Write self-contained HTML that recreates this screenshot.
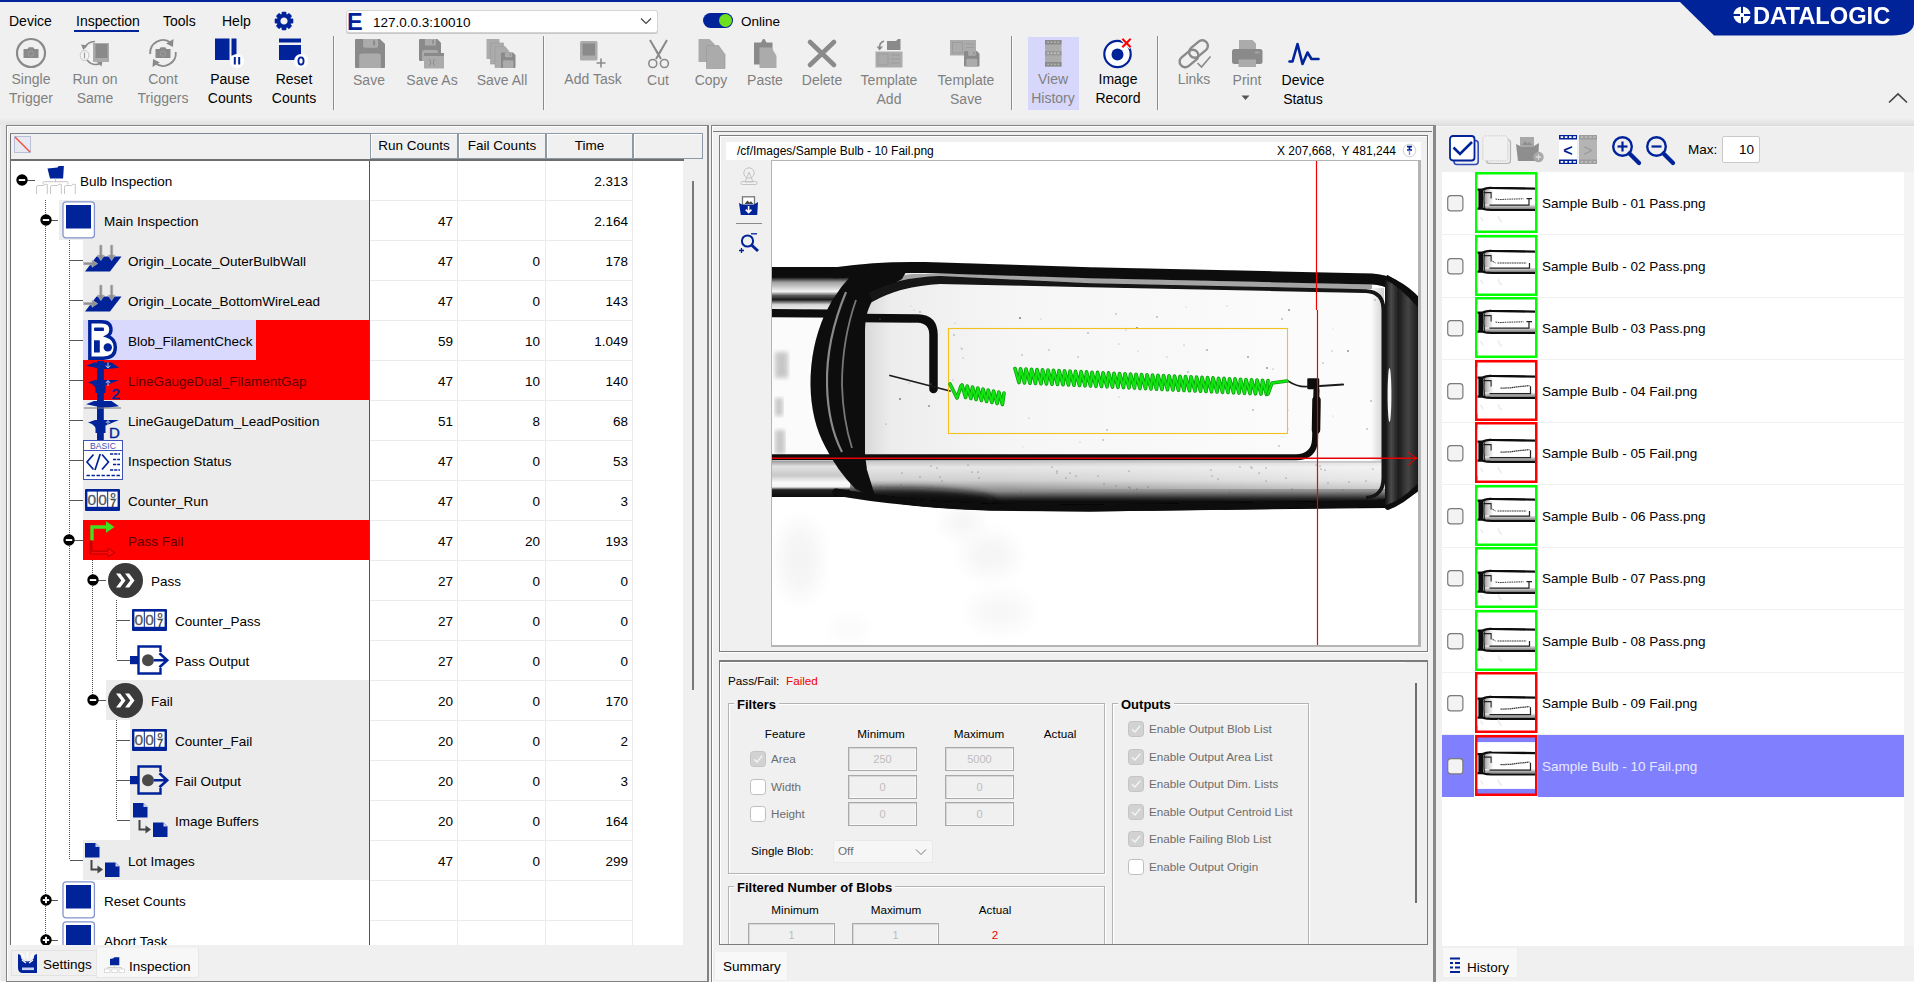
<!DOCTYPE html><html><head><meta charset="utf-8"><title>Inspection</title><style>
*{box-sizing:border-box}
html,body{margin:0;padding:0}
html{overflow:hidden;width:1914px;height:982px}
body{width:1914px;height:982px;overflow:hidden;background:#f0f0f0;font-family:"Liberation Sans",sans-serif;font-size:13px;color:#000;position:relative}
.abs{position:absolute}
.t{position:absolute;white-space:nowrap;line-height:1}
.c{text-align:center}
.r{text-align:right}
svg{position:absolute;overflow:visible}
</style></head><body>
<div class="abs" style="left:0;top:0;width:1914px;height:2px;background:#00239a"></div>
<div class="t" style="left:9px;top:13px;font-size:14px;color:#000;line-height:16px;">Device</div>
<div class="t" style="left:76px;top:13px;font-size:14px;color:#000;line-height:16px;">Inspection</div>
<div class="abs" style="left:74px;top:30px;width:65px;height:2px;background:#00239a"></div>
<div class="t" style="left:163px;top:13px;font-size:14px;color:#000;line-height:16px;">Tools</div>
<div class="t" style="left:222px;top:13px;font-size:14px;color:#000;line-height:16px;">Help</div>
<svg style="left:274px;top:11px" width="20" height="20" viewBox="0 0 20 20"><g transform="translate(10,10)"><rect x="-2.4" y="-9.3" width="4.8" height="5" rx="1" transform="rotate(0)" fill="#00239a"/><rect x="-2.4" y="-9.3" width="4.8" height="5" rx="1" transform="rotate(45)" fill="#00239a"/><rect x="-2.4" y="-9.3" width="4.8" height="5" rx="1" transform="rotate(90)" fill="#00239a"/><rect x="-2.4" y="-9.3" width="4.8" height="5" rx="1" transform="rotate(135)" fill="#00239a"/><rect x="-2.4" y="-9.3" width="4.8" height="5" rx="1" transform="rotate(180)" fill="#00239a"/><rect x="-2.4" y="-9.3" width="4.8" height="5" rx="1" transform="rotate(225)" fill="#00239a"/><rect x="-2.4" y="-9.3" width="4.8" height="5" rx="1" transform="rotate(270)" fill="#00239a"/><rect x="-2.4" y="-9.3" width="4.8" height="5" rx="1" transform="rotate(315)" fill="#00239a"/><circle r="5.4" fill="none" stroke="#00239a" stroke-width="3.6"/></g></svg>
<div class="abs" style="left:346px;top:9.5px;width:312px;height:23.5px;background:#fff;border:1px solid #d4d4d4;border-radius:3px;box-shadow:0 1px 0 #c8c8c8"></div>
<div class="t" style="left:347px;top:10px;font-size:23.5px;color:#00239a;line-height:25.5px;font-weight:bold;line-height:25px;">E</div>
<div class="t" style="left:373px;top:15px;font-size:13.5px;color:#000;line-height:15.5px;">127.0.0.3:10010</div>
<svg style="left:640px;top:17px" width="12" height="8" viewBox="0 0 12 8"><path d="M1,1.5 L6,6.5 L11,1.5" fill="none" stroke="#444" stroke-width="1.2"/></svg>
<div class="abs" style="left:703px;top:12.5px;width:30px;height:15px;border-radius:7.5px;background:#00239a"></div>
<div class="abs" style="left:718.5px;top:13.5px;width:13px;height:13px;border-radius:6.5px;background:#6ee01e"></div>
<div class="t" style="left:741px;top:13.5px;font-size:13.5px;color:#000;line-height:15.5px;">Online</div>
<div class="abs" style="left:333px;top:36px;width:1px;height:74px;background:#8c8c8c"></div>
<div class="abs" style="left:334px;top:36px;width:1px;height:74px;background:#fafafa"></div>
<div class="abs" style="left:543px;top:36px;width:1px;height:74px;background:#8c8c8c"></div>
<div class="abs" style="left:544px;top:36px;width:1px;height:74px;background:#fafafa"></div>
<div class="abs" style="left:1011px;top:36px;width:1px;height:74px;background:#8c8c8c"></div>
<div class="abs" style="left:1012px;top:36px;width:1px;height:74px;background:#fafafa"></div>
<div class="abs" style="left:1157px;top:36px;width:1px;height:74px;background:#8c8c8c"></div>
<div class="abs" style="left:1158px;top:36px;width:1px;height:74px;background:#fafafa"></div>
<svg style="left:15px;top:37px" width="32" height="32" viewBox="0 0 32 32"><circle cx="16" cy="16" r="14" fill="none" stroke="#8a8a8a" stroke-width="2.2"/><path d="M8.5,12.0 h4 l1.2,-1.8 h4.6 l1.2,1.8 h4 v9 h-15 z" fill="#8a8a8a"/><circle cx="16" cy="16.7" r="2.6" fill="none" stroke="#a0a0a0" stroke-width="0.9"/></svg>
<div class="t" style="left:-19px;top:71px;font-size:14px;color:#808080;line-height:16px;width:100px;text-align:center;">Single</div><div class="t" style="left:-19px;top:90px;font-size:14px;color:#808080;line-height:16px;width:100px;text-align:center;">Trigger</div>
<svg style="left:78px;top:38px" width="34" height="30" viewBox="0 0 34 30"><path d="M17,3.5 A11.5,11.5 0 0 0 6.5,10" fill="none" stroke="#8a8a8a" stroke-width="1.6"/><path d="M3,6.5 l6.5,1 l-4.2,4.6 z" fill="#8a8a8a"/><path d="M9,22 A11.5,11.5 0 0 0 21,26" fill="none" stroke="#8a8a8a" stroke-width="1.6"/><path d="M24.5,23 l-1,5.6 l-4.6,-4 z" fill="#8a8a8a"/><rect x="15" y="5" width="16" height="19" fill="#ababab"/><rect x="17.5" y="6" width="12" height="14" fill="#8a8a8a"/><ellipse cx="6.5" cy="17.5" rx="4.3" ry="5" fill="#f4f4f4" stroke="#c4c4c4" stroke-width="1"/><rect x="5.9" y="14.5" width="1.2" height="6" fill="#9a9a9a"/><rect x="12.5" y="8" width="2" height="14" fill="#f8f8f8"/></svg>
<div class="t" style="left:45px;top:71px;font-size:14px;color:#808080;line-height:16px;width:100px;text-align:center;">Run on</div><div class="t" style="left:45px;top:90px;font-size:14px;color:#808080;line-height:16px;width:100px;text-align:center;">Same</div>
<svg style="left:147px;top:37px" width="32" height="32" viewBox="0 0 32 32"><path d="M3.2,17 A12.8,12.8 0 0 1 24,6" fill="none" stroke="#8a8a8a" stroke-width="1.8"/><path d="M26.5,2 l-0.6,8 l-6.8,-3.6 z" fill="#8a8a8a"/><path d="M28.8,15 A12.8,12.8 0 0 1 8,26" fill="none" stroke="#8a8a8a" stroke-width="1.8"/><path d="M5.5,30 l0.6,-8 l6.8,3.6 z" fill="#8a8a8a"/><path d="M8.5,12.0 h4 l1.2,-1.8 h4.6 l1.2,1.8 h4 v9 h-15 z" fill="#8a8a8a"/><circle cx="16" cy="16.7" r="2.6" fill="none" stroke="#a0a0a0" stroke-width="0.9"/></svg>
<div class="t" style="left:113px;top:71px;font-size:14px;color:#808080;line-height:16px;width:100px;text-align:center;">Cont</div><div class="t" style="left:113px;top:90px;font-size:14px;color:#808080;line-height:16px;width:100px;text-align:center;">Triggers</div>
<svg style="left:215px;top:38px" width="32" height="32" viewBox="0 0 32 32"><rect x="0" y="0.5" width="14.5" height="21.5" fill="#00239a"/><rect x="16.5" y="0.5" width="5" height="17" fill="#00239a"/><circle cx="22" cy="23" r="7" fill="#fff"/><rect x="18.8" y="19" width="2" height="7.5" fill="#00239a"/><rect x="23.2" y="19" width="2" height="7.5" fill="#00239a"/></svg>
<div class="t" style="left:180px;top:71px;font-size:14px;color:#000;line-height:16px;width:100px;text-align:center;">Pause</div><div class="t" style="left:180px;top:90px;font-size:14px;color:#000;line-height:16px;width:100px;text-align:center;">Counts</div>
<svg style="left:279px;top:38px" width="32" height="32" viewBox="0 0 32 32"><rect x="0" y="0.5" width="22" height="4" fill="#00239a"/><rect x="0" y="7" width="22" height="15" fill="#00239a"/><circle cx="22" cy="23" r="7" fill="#fff"/><ellipse cx="22" cy="23" rx="2.6" ry="3.6" fill="none" stroke="#00239a" stroke-width="1.8"/></svg>
<div class="t" style="left:244px;top:71px;font-size:14px;color:#000;line-height:16px;width:100px;text-align:center;">Reset</div><div class="t" style="left:244px;top:90px;font-size:14px;color:#000;line-height:16px;width:100px;text-align:center;">Counts</div>
<svg style="left:355px;top:39px" width="30" height="29" viewBox="0 0 30 29"><path d="M1,0 H24.9 L30,5.1000000000000005 V28 Q30,29 29,29 H1 Q0,29 0,28 V1 Q0,0 1,0 Z" fill="#8a8a8a"/><path d="M8.100000000000001,0 H23.1 V6.96 Q23.1,8.7 21.299999999999997,8.7 H9.9 Q8.100000000000001,8.7 8.100000000000001,6.96 Z" fill="#ababab"/><rect x="18.0" y="1.4500000000000002" width="2.1" height="4.930000000000001" fill="#8a8a8a"/><path d="M4.2,29 V16.82 Q4.2,14.5 7.199999999999999,14.5 H22.8 Q25.8,14.5 25.8,16.82 V29 Z" fill="#ababab"/></svg>
<div class="t" style="left:319px;top:72px;font-size:14px;color:#808080;line-height:16px;width:100px;text-align:center;">Save</div>
<svg style="left:419px;top:39px" width="26" height="30" viewBox="0 0 26 30"><path d="M1,0 H18.259999999999998 L22,3.74 V21 Q22,22 21,22 H1 Q0,22 0,21 V1 Q0,0 1,0 Z" fill="#8a8a8a"/><path d="M5.94,0 H16.94 V5.279999999999999 Q16.94,6.6 15.62,6.6 H7.260000000000001 Q5.94,6.6 5.94,5.279999999999999 Z" fill="#ababab"/><rect x="13.2" y="1.1" width="1.54" height="3.74" fill="#8a8a8a"/><path d="M3.08,22 V12.76 Q3.08,11.0 5.279999999999999,11.0 H16.72 Q18.919999999999998,11.0 18.919999999999998,12.76 V22 Z" fill="#ababab"/><rect x="5" y="14" width="20" height="15.5" fill="#ababab"/><rect x="5" y="14" width="20" height="3" fill="#8a8a8a"/><path d="M10,20 q3.5,3.5 0,7 M16,20 q-3.5,3.5 0,7" stroke="#8a8a8a" stroke-width="1" fill="none"/></svg>
<div class="t" style="left:382px;top:72px;font-size:14px;color:#808080;line-height:16px;width:100px;text-align:center;">Save As</div>
<svg style="left:486px;top:39px" width="31" height="30" viewBox="0 0 31 30"><rect x="0.5" y="0" width="13" height="20" fill="#ababab"/><rect x="4.5" y="4" width="13" height="21" fill="#ababab" stroke="#9c9c9c" stroke-width="0.6"/><path d="M9,7.5 h10 l4,5 v16 h-14 z" fill="#ababab" stroke="#9c9c9c" stroke-width="0.6"/><path d="M16,13.5 H27.035 L29.5,15.965 V28.0 Q29.5,29.0 28.5,29.0 H16 Q15,29.0 15,28.0 V14.5 Q15,13.5 16,13.5 Z" fill="#8a8a8a"/><path d="M18.915,13.5 H26.165 V17.22 Q26.165,18.15 25.295,18.15 H19.785 Q18.915,18.15 18.915,17.22 Z" fill="#ababab"/><rect x="23.7" y="14.275" width="1.0150000000000001" height="2.6350000000000002" fill="#8a8a8a"/><path d="M17.03,29.0 V22.490000000000002 Q17.03,21.25 18.48,21.25 H26.02 Q27.47,21.25 27.47,22.490000000000002 V29.0 Z" fill="#ababab"/></svg>
<div class="t" style="left:452px;top:72px;font-size:14px;color:#808080;line-height:16px;width:100px;text-align:center;">Save All</div>
<svg style="left:580px;top:41px" width="28" height="28" viewBox="0 0 28 28"><rect x="0" y="0" width="17.5" height="19.5" rx="1.5" fill="#ababab"/><rect x="2.5" y="2.5" width="12.5" height="12" fill="#8a8a8a"/><path d="M16.5,22 h9 M21,17.5 v9" stroke="#8a8a8a" stroke-width="1.6"/></svg>
<div class="t" style="left:543px;top:71px;font-size:14px;color:#808080;line-height:16px;width:100px;text-align:center;">Add Task</div>
<svg style="left:647px;top:39px" width="24" height="30" viewBox="0 0 24 30"><path d="M3,1 L14,20 M20,1 L9,20" stroke="#8a8a8a" stroke-width="2" fill="none"/><path d="M3,1 L11.5,13.5 L10,15 Z M20,1 L11.5,13.5 L13,15 Z" fill="#8a8a8a"/><ellipse cx="5.8" cy="24.5" rx="4" ry="4" fill="none" stroke="#8a8a8a" stroke-width="1.6"/><ellipse cx="17.4" cy="24.5" rx="4" ry="4" fill="none" stroke="#8a8a8a" stroke-width="1.6"/></svg>
<div class="t" style="left:608px;top:72px;font-size:14px;color:#808080;line-height:16px;width:100px;text-align:center;">Cut</div>
<svg style="left:698px;top:39px" width="28" height="30" viewBox="0 0 28 30"><path d="M0.5,0 h11 l5,5 v18 h-16 z" fill="#ababab"/><path d="M8.5,6.5 h12 l6.5,9 v14 h-18.5 z" fill="#ababab" stroke="#9a9a9a" stroke-width="0.7"/></svg>
<div class="t" style="left:661px;top:72px;font-size:14px;color:#808080;line-height:16px;width:100px;text-align:center;">Copy</div>
<svg style="left:753px;top:38px" width="25" height="31" viewBox="0 0 25 31"><path d="M1,4.5 h7 l2,-3.5 h1.5 l2,3.5 h6 v22 h-18.5 z" fill="#8a8a8a"/><path d="M6.5,9.5 h12 l5,8.5 v12 h-17 z" fill="#ababab"/></svg>
<div class="t" style="left:715px;top:72px;font-size:14px;color:#808080;line-height:16px;width:100px;text-align:center;">Paste</div>
<svg style="left:808px;top:40px" width="28" height="28" viewBox="0 0 28 28"><path d="M2,2 L26,25 M26,2 L2,25" stroke="#8a8a8a" stroke-width="4.6" stroke-linecap="round"/></svg>
<div class="t" style="left:772px;top:72px;font-size:14px;color:#808080;line-height:16px;width:100px;text-align:center;">Delete</div>
<svg style="left:875px;top:38px" width="30" height="30" viewBox="0 0 30 30"><rect x="0.5" y="13.5" width="27" height="16" fill="#ababab"/><rect x="3" y="16" width="10" height="11" fill="none" stroke="#9a9a9a" stroke-width="0.8"/><path d="M16,17 h9 M16,21 h9 M16,25 h9" stroke="#9a9a9a" stroke-width="0.9"/><path d="M12,3 h9 l2,-2 h2.5 v11 h-13.5 z" fill="#8a8a8a"/><path d="M9,3 q-5,2 -4.5,7" fill="none" stroke="#8a8a8a" stroke-width="1.6"/><path d="M1.5,8.5 h6.5 l-3.4,4 z" fill="#8a8a8a"/></svg>
<div class="t" style="left:839px;top:72px;font-size:14px;color:#808080;line-height:16px;width:100px;text-align:center;">Template</div><div class="t" style="left:839px;top:91px;font-size:14px;color:#808080;line-height:16px;width:100px;text-align:center;">Add</div>
<svg style="left:950px;top:40px" width="32" height="28" viewBox="0 0 32 28"><rect x="0" y="0" width="26" height="15.5" fill="#ababab"/><rect x="2.5" y="2.5" width="10" height="10.5" fill="none" stroke="#9a9a9a" stroke-width="0.8"/><path d="M16,4 h8 M16,7.5 h8" stroke="#9a9a9a" stroke-width="0.9"/><path d="M15,11 H26.865 L29.5,13.635 V25.5 Q29.5,26.5 28.5,26.5 H15 Q14,26.5 14,25.5 V12 Q14,11 15,11 Z" fill="#8a8a8a"/><path d="M18.185000000000002,11 H25.935000000000002 V14.719999999999999 Q25.935000000000002,15.649999999999999 25.005,15.649999999999999 H19.115000000000002 Q18.185000000000002,15.649999999999999 18.185000000000002,14.719999999999999 Z" fill="#ababab"/><rect x="23.299999999999997" y="11.775" width="1.0850000000000002" height="2.6350000000000002" fill="#8a8a8a"/><path d="M16.17,26.5 V19.990000000000002 Q16.17,18.75 17.72,18.75 H25.78 Q27.33,18.75 27.33,19.990000000000002 V26.5 Z" fill="#ababab"/></svg>
<div class="t" style="left:916px;top:72px;font-size:14px;color:#808080;line-height:16px;width:100px;text-align:center;">Template</div><div class="t" style="left:916px;top:91px;font-size:14px;color:#808080;line-height:16px;width:100px;text-align:center;">Save</div>
<div class="abs" style="left:1028px;top:37px;width:51px;height:73px;background:#d7d7fb"></div>
<svg style="left:1045px;top:40px" width="17" height="27" viewBox="0 0 17 27"><rect x="0" y="0" width="16.5" height="26.5" fill="#ababab"/><rect x="0" y="0" width="16.5" height="4.5" fill="#8a8a8a"/><rect x="0" y="22" width="16.5" height="4.5" fill="#8a8a8a"/><rect x="0" y="11" width="16.5" height="4.5" fill="#999"/><rect x="2.2" y="1.4" width="1.8" height="1.6" fill="#b4b4b4"/><rect x="2.2" y="23.6" width="1.8" height="1.6" fill="#b4b4b4"/><rect x="5.6" y="1.4" width="1.8" height="1.6" fill="#b4b4b4"/><rect x="5.6" y="23.6" width="1.8" height="1.6" fill="#b4b4b4"/><rect x="9.0" y="1.4" width="1.8" height="1.6" fill="#b4b4b4"/><rect x="9.0" y="23.6" width="1.8" height="1.6" fill="#b4b4b4"/><rect x="12.399999999999999" y="1.4" width="1.8" height="1.6" fill="#b4b4b4"/><rect x="12.399999999999999" y="23.6" width="1.8" height="1.6" fill="#b4b4b4"/><rect x="2.2" y="12.4" width="1.8" height="1.6" fill="#c4c4c4"/><rect x="5.6" y="12.4" width="1.8" height="1.6" fill="#c4c4c4"/><rect x="9.0" y="12.4" width="1.8" height="1.6" fill="#c4c4c4"/><rect x="12.399999999999999" y="12.4" width="1.8" height="1.6" fill="#c4c4c4"/></svg>
<div class="t" style="left:1003px;top:71px;font-size:14px;color:#808080;line-height:16px;width:100px;text-align:center;">View</div><div class="t" style="left:1003px;top:90px;font-size:14px;color:#808080;line-height:16px;width:100px;text-align:center;">History</div>
<svg style="left:1102px;top:38px" width="34" height="34" viewBox="0 0 34 34"><circle cx="15.5" cy="16" r="13.2" fill="#fff" stroke="#00239a" stroke-width="2.2"/><circle cx="15.5" cy="16.5" r="6" fill="#00239a"/><path d="M20,0.5 L29,9.5 M29,0.5 L20,9.5" stroke="#fff" stroke-width="4.5"/><path d="M20.3,0.8 L28.7,9.2 M28.7,0.8 L20.3,9.2" stroke="#f00" stroke-width="2.2"/></svg>
<div class="t" style="left:1068px;top:71px;font-size:14px;color:#000;line-height:16px;width:100px;text-align:center;">Image</div><div class="t" style="left:1068px;top:90px;font-size:14px;color:#000;line-height:16px;width:100px;text-align:center;">Record</div>
<svg style="left:1177px;top:37px" width="36" height="34" viewBox="0 0 36 34"><rect x="-10.5" y="-5.6" width="21" height="11.2" rx="5.6" transform="translate(12,21.5) rotate(-40)" fill="none" stroke="#8a8a8a" stroke-width="2.4"/><rect x="-10.5" y="-5.6" width="21" height="11.2" rx="5.6" transform="translate(21.5,12) rotate(-40)" fill="none" stroke="#8a8a8a" stroke-width="2.4"/><path d="M20.5,26 l4,4 l9,-10.5" fill="none" stroke="#8a8a8a" stroke-width="1.6"/></svg>
<div class="t" style="left:1144px;top:71px;font-size:14px;color:#808080;line-height:16px;width:100px;text-align:center;">Links</div>
<svg style="left:1232px;top:40px" width="31" height="28" viewBox="0 0 31 28"><path d="M7,0 h13.5 l3.5,3.5 v6 h-17 z" fill="#ababab"/><rect x="0" y="9" width="30.5" height="15" rx="2.5" fill="#8a8a8a"/><rect x="6.5" y="19.5" width="17.5" height="7.5" fill="#ababab"/><rect x="23" y="11.5" width="4.5" height="2" fill="#a5a5a5"/></svg>
<div class="t" style="left:1197px;top:72px;font-size:14px;color:#808080;line-height:16px;width:100px;text-align:center;">Print</div>
<svg style="left:1241px;top:95px" width="10" height="6" viewBox="0 0 10 6"><path d="M0.5,0.5 h8 l-4,4.5 z" fill="#555"/></svg>
<svg style="left:1288px;top:41px" width="32" height="26" viewBox="0 0 32 26"><path d="M1.5,20.5 H4.5 L9.5,3 L14.5,23 L19.5,11.5 L23.5,18 H30.5" fill="none" stroke="#00239a" stroke-width="2.6" stroke-linejoin="round" stroke-linecap="round"/></svg>
<div class="t" style="left:1253px;top:72px;font-size:14px;color:#000;line-height:16px;width:100px;text-align:center;">Device</div><div class="t" style="left:1253px;top:91px;font-size:14px;color:#000;line-height:16px;width:100px;text-align:center;">Status</div>
<div class="abs" style="left:0;top:118px;width:1914px;height:7px;background:linear-gradient(rgba(0,0,0,0),rgba(0,0,0,0.07))"></div>
<svg style="left:1888px;top:92px" width="20" height="12" viewBox="0 0 20 12"><path d="M1,10.5 L10,2 L19,10.5" fill="none" stroke="#444" stroke-width="1.7"/></svg>
<svg style="left:1680px;top:2px" width="234" height="36" viewBox="0 0 234 36"><path d="M0,0 H234 V22 Q232,33.5 212,33.5 H34 Z" fill="#00239a"/></svg>
<svg style="left:1733px;top:6px" width="20" height="20" viewBox="0 0 20 20"><circle cx="9" cy="9" r="8.6" fill="#fff"/><rect x="8" y="0" width="2" height="7" fill="#00239a"/><rect x="8" y="11" width="2" height="7" fill="#00239a"/><rect x="0" y="8" width="7" height="2" fill="#00239a"/><rect x="11" y="8" width="7" height="2" fill="#00239a"/></svg>
<div class="t" style="left:1753px;top:4px;font-size:23px;line-height:24px;font-weight:bold;color:#fff;letter-spacing:0;transform-origin:0 0;transform:scaleX(1.03)">DATALOGIC</div>
<div class="abs" style="left:1px;top:123px;width:5px;height:859px;background:#e8e8e8;"></div>
<div class="abs" style="left:0px;top:980.5px;width:1914px;height:1.5px;background:#f8f8f8;"></div>
<div class="abs" style="left:6px;top:125px;width:703px;height:857px;background:transparent;border:1px solid #828282;border-right:2px solid #828282;box-shadow:inset 1px 1px 0 #fff"></div>
<div class="abs" style="left:11px;top:160px;width:672px;height:785px;background:#fff;"></div>
<div class="abs" style="left:0;top:0;width:1914px;height:945px;overflow:hidden;pointer-events:none">
<div class="abs" style="left:59px;top:200px;width:310px;height:40px;background:#ececec;"></div>
<div class="abs" style="left:83px;top:240px;width:286px;height:40px;background:#ececec;"></div>
<div class="abs" style="left:83px;top:280px;width:286px;height:40px;background:#ececec;"></div>
<div class="abs" style="left:83px;top:320px;width:286px;height:40px;background:#ff0000;"></div>
<div class="abs" style="left:83px;top:320px;width:173px;height:40px;background:#d9d9fd;"></div>
<div class="abs" style="left:83px;top:360px;width:286px;height:40px;background:#ff0000;"></div>
<div class="abs" style="left:83px;top:400px;width:286px;height:40px;background:#ececec;"></div>
<div class="abs" style="left:83px;top:440px;width:286px;height:40px;background:#ececec;"></div>
<div class="abs" style="left:83px;top:480px;width:286px;height:40px;background:#ececec;"></div>
<div class="abs" style="left:83px;top:520px;width:286px;height:40px;background:#ff0000;"></div>
<div class="abs" style="left:106px;top:680px;width:263px;height:40px;background:#ececec;"></div>
<div class="abs" style="left:130px;top:720px;width:239px;height:40px;background:#ececec;"></div>
<div class="abs" style="left:130px;top:760px;width:239px;height:40px;background:#ececec;"></div>
<div class="abs" style="left:130px;top:800px;width:239px;height:40px;background:#ececec;"></div>
<div class="abs" style="left:83px;top:840px;width:286px;height:40px;background:#ececec;"></div>
<div class="abs" style="left:370px;top:200px;width:262px;height:1px;background:#ebebeb;"></div>
<div class="abs" style="left:370px;top:240px;width:262px;height:1px;background:#ebebeb;"></div>
<div class="abs" style="left:370px;top:280px;width:262px;height:1px;background:#ebebeb;"></div>
<div class="abs" style="left:370px;top:320px;width:262px;height:1px;background:#ebebeb;"></div>
<div class="abs" style="left:370px;top:360px;width:262px;height:1px;background:#ebebeb;"></div>
<div class="abs" style="left:370px;top:400px;width:262px;height:1px;background:#ebebeb;"></div>
<div class="abs" style="left:370px;top:440px;width:262px;height:1px;background:#ebebeb;"></div>
<div class="abs" style="left:370px;top:480px;width:262px;height:1px;background:#ebebeb;"></div>
<div class="abs" style="left:370px;top:520px;width:262px;height:1px;background:#ebebeb;"></div>
<div class="abs" style="left:370px;top:560px;width:262px;height:1px;background:#ebebeb;"></div>
<div class="abs" style="left:370px;top:600px;width:262px;height:1px;background:#ebebeb;"></div>
<div class="abs" style="left:370px;top:640px;width:262px;height:1px;background:#ebebeb;"></div>
<div class="abs" style="left:370px;top:680px;width:262px;height:1px;background:#ebebeb;"></div>
<div class="abs" style="left:370px;top:720px;width:262px;height:1px;background:#ebebeb;"></div>
<div class="abs" style="left:370px;top:760px;width:262px;height:1px;background:#ebebeb;"></div>
<div class="abs" style="left:370px;top:800px;width:262px;height:1px;background:#ebebeb;"></div>
<div class="abs" style="left:370px;top:840px;width:262px;height:1px;background:#ebebeb;"></div>
<div class="abs" style="left:370px;top:880px;width:262px;height:1px;background:#ebebeb;"></div>
<div class="abs" style="left:370px;top:920px;width:262px;height:1px;background:#ebebeb;"></div>
<div class="abs" style="left:370px;top:960px;width:262px;height:1px;background:#ebebeb;"></div>
<div class="abs" style="left:457px;top:160px;width:1px;height:785px;background:#ebebeb;"></div>
<div class="abs" style="left:545px;top:160px;width:1px;height:785px;background:#ebebeb;"></div>
<div class="abs" style="left:632px;top:160px;width:1px;height:785px;background:#ebebeb;"></div>
<div class="abs" style="left:45px;top:200px;width:1px;height:745px;background:repeating-linear-gradient(#555 0 1px,transparent 1px 2px)"></div>
<div class="abs" style="left:69px;top:240px;width:1px;height:620px;background:repeating-linear-gradient(#555 0 1px,transparent 1px 2px)"></div>
<div class="abs" style="left:92px;top:560px;width:1px;height:140px;background:repeating-linear-gradient(#555 0 1px,transparent 1px 2px)"></div>
<div class="abs" style="left:116px;top:600px;width:1px;height:60px;background:repeating-linear-gradient(#555 0 1px,transparent 1px 2px)"></div>
<div class="abs" style="left:116px;top:720px;width:1px;height:100px;background:repeating-linear-gradient(#555 0 1px,transparent 1px 2px)"></div>
<div class="abs" style="left:26px;top:180px;width:9px;height:1px;background:#555;"></div>
<svg style="left:38px;top:166.0px" width="38" height="30" viewBox="0 0 38 30"><path d="M9.5,2.6 L19.5,1.4 L20.6,0 H25.9 L25.1,12.5 H12 Z" fill="#00239a"/><path d="M9.5,2.6 L19.5,1.4 L21.5,3 L12,4.2 Z" fill="#3350c8" opacity="0.0"/><path d="M17.5,12.5 v3.5 M5,18.5 v-2 q0,-0.8 0.8,-0.8 h23.4 q0.8,0 0.8,0.8 v2" fill="none" stroke="#c6c6c6" stroke-width="1"/><path d="M-1.5,28 v-6.8 q0,-1.7 1.7,-1.7 h5.3 l1.6,-1.2 h2.2 v9.7" fill="#fff" stroke="#c6c6c6" stroke-width="1"/><path d="M12.5,28 v-6.8 q0,-1.7 1.7,-1.7 h5.3 l1.6,-1.2 h2.2 v9.7" fill="#fff" stroke="#c6c6c6" stroke-width="1"/><path d="M26.5,28 v-6.8 q0,-1.7 1.7,-1.7 h5.3 l1.6,-1.2 h2.2 v9.7" fill="#fff" stroke="#c6c6c6" stroke-width="1"/></svg>
<svg style="left:15.5px;top:174.2px" width="12" height="12" viewBox="0 0 12 12"><circle cx="6" cy="6" r="5.7" fill="#000"/><rect x="2.8" y="5.1" width="6.4" height="1.9" fill="#fff"/></svg>
<div class="t" style="left:80px;top:174px;font-size:13.5px;color:#000;line-height:16px;">Bulb Inspection</div>
<div class="t" style="left:546px;top:174px;font-size:13.5px;color:#000;line-height:16px;width:82px;text-align:right;">2.313</div>
<div class="abs" style="left:50px;top:220px;width:8px;height:1px;background:#555;"></div>
<svg style="left:62px;top:200.7px" width="34" height="38" viewBox="0 0 34 38"><rect x="1" y="0.8" width="31.4" height="36" rx="3" fill="#fff" stroke="#8493cf" stroke-width="1.3"/><rect x="4" y="4" width="25" height="23.5" fill="#00239a"/></svg>
<svg style="left:39.5px;top:214.2px" width="12" height="12" viewBox="0 0 12 12"><circle cx="6" cy="6" r="5.7" fill="#000"/><rect x="2.8" y="5.1" width="6.4" height="1.9" fill="#fff"/></svg>
<div class="t" style="left:104px;top:214px;font-size:13.5px;color:#000;line-height:16px;">Main Inspection</div>
<div class="t" style="left:370px;top:214px;font-size:13.5px;color:#000;line-height:16px;width:83px;text-align:right;">47</div>
<div class="t" style="left:546px;top:214px;font-size:13.5px;color:#000;line-height:16px;width:82px;text-align:right;">2.164</div>
<div class="abs" style="left:70px;top:260px;width:13px;height:1px;background:#555;"></div>
<svg style="left:83px;top:241.0px" width="40" height="32" viewBox="0 0 40 32"><path d="M2,30.5 L13.5,15.5 H38.5 L27,30.5 Z" fill="#00239a"/><path d="M16.5,4 h2.6 v10 h2.4 l-3.7,5.5 l-3.7,-5.5 h2.4 z" fill="#8f8f8f" stroke="#c8c8c8" stroke-width="0.6"/><path d="M27.3,4 h2.6 v10 h2.4 l-3.7,5.5 l-3.7,-5.5 h2.4 z" fill="#8f8f8f" stroke="#c8c8c8" stroke-width="0.6"/><path d="M0.5,21.3 h8.5 v-2.3 l5.5,3.6 l-5.5,3.6 v-2.3 h-8.5 z" fill="#8f8f8f" stroke="#c8c8c8" stroke-width="0.6"/></svg>
<div class="t" style="left:128px;top:254px;font-size:13.5px;color:#000;line-height:16px;">Origin_Locate_OuterBulbWall</div>
<div class="t" style="left:370px;top:254px;font-size:13.5px;color:#000;line-height:16px;width:83px;text-align:right;">47</div>
<div class="t" style="left:458px;top:254px;font-size:13.5px;color:#000;line-height:16px;width:82px;text-align:right;">0</div>
<div class="t" style="left:546px;top:254px;font-size:13.5px;color:#000;line-height:16px;width:82px;text-align:right;">178</div>
<div class="abs" style="left:70px;top:300px;width:13px;height:1px;background:#555;"></div>
<svg style="left:83px;top:281.0px" width="40" height="32" viewBox="0 0 40 32"><path d="M2,30.5 L13.5,15.5 H38.5 L27,30.5 Z" fill="#00239a"/><path d="M16.5,4 h2.6 v10 h2.4 l-3.7,5.5 l-3.7,-5.5 h2.4 z" fill="#8f8f8f" stroke="#c8c8c8" stroke-width="0.6"/><path d="M27.3,4 h2.6 v10 h2.4 l-3.7,5.5 l-3.7,-5.5 h2.4 z" fill="#8f8f8f" stroke="#c8c8c8" stroke-width="0.6"/><path d="M0.5,21.3 h8.5 v-2.3 l5.5,3.6 l-5.5,3.6 v-2.3 h-8.5 z" fill="#8f8f8f" stroke="#c8c8c8" stroke-width="0.6"/></svg>
<div class="t" style="left:128px;top:294px;font-size:13.5px;color:#000;line-height:16px;">Origin_Locate_BottomWireLead</div>
<div class="t" style="left:370px;top:294px;font-size:13.5px;color:#000;line-height:16px;width:83px;text-align:right;">47</div>
<div class="t" style="left:458px;top:294px;font-size:13.5px;color:#000;line-height:16px;width:82px;text-align:right;">0</div>
<div class="t" style="left:546px;top:294px;font-size:13.5px;color:#000;line-height:16px;width:82px;text-align:right;">143</div>
<div class="abs" style="left:70px;top:340px;width:13px;height:1px;background:#555;"></div>
<svg style="left:86px;top:319.5px" width="32" height="42" viewBox="0 0 32 42"><path d="M3.8,1.8 H15.5 Q25,1.8 25,9.8 Q25,14.2 21.3,16.2 Q29.3,18.8 29.3,27.6 Q29.3,38.2 17.5,38.2 H3.8 Z" fill="#fff" stroke="#00239a" stroke-width="3.4"/><rect x="8" y="7.6" width="10" height="3.4" rx="1" fill="#00239a"/><rect x="8" y="20.3" width="5.8" height="12.2" fill="#00239a"/><circle cx="21.8" cy="27.4" r="4.2" fill="#00239a"/></svg>
<div class="t" style="left:128px;top:334px;font-size:13.5px;color:#000;line-height:16px;">Blob_FilamentCheck</div>
<div class="t" style="left:370px;top:334px;font-size:13.5px;color:#000;line-height:16px;width:83px;text-align:right;">59</div>
<div class="t" style="left:458px;top:334px;font-size:13.5px;color:#000;line-height:16px;width:82px;text-align:right;">10</div>
<div class="t" style="left:546px;top:334px;font-size:13.5px;color:#000;line-height:16px;width:82px;text-align:right;">1.049</div>
<div class="abs" style="left:70px;top:380px;width:13px;height:1px;background:#555;"></div>
<svg style="left:83px;top:360.5px" width="40" height="40" viewBox="0 0 40 40"><rect x="14" y="0" width="6.8" height="40" fill="#00239a"/><path d="M3,4.7 L11,1.5 H28.5 L36,6.7 Q26,8.0 19.5,8.0 Q12,6.5 3,4.7 Z" fill="#00239a"/><path d="M5,21.5 L12,19 H36 L31,21 Q26,23.5 22.5,24.5 V32 H12.5 V27 Q11,23 5,21.5 Z" fill="#00239a"/><path d="M25,1.5 v5 M22.8,4.5 l2.2,2.5 l2.2,-2.5" fill="none" stroke="#d8d8e8" stroke-width="0.9"/><path d="M25,25 v-5 M22.8,22 l2.2,-2.5 l2.2,2.5" fill="none" stroke="#d8d8e8" stroke-width="0.9"/><text x="28.5" y="37.5" font-size="15" fill="#00239a" stroke="#00239a" stroke-width="0.5" font-family="Liberation Sans,sans-serif">2</text></svg>
<div class="t" style="left:128px;top:374px;font-size:13.5px;color:#5c0000;line-height:16px;">LineGaugeDual_FilamentGap</div>
<div class="t" style="left:370px;top:374px;font-size:13.5px;color:#000;line-height:16px;width:83px;text-align:right;">47</div>
<div class="t" style="left:458px;top:374px;font-size:13.5px;color:#000;line-height:16px;width:82px;text-align:right;">10</div>
<div class="t" style="left:546px;top:374px;font-size:13.5px;color:#000;line-height:16px;width:82px;text-align:right;">140</div>
<div class="abs" style="left:70px;top:420px;width:13px;height:1px;background:#555;"></div>
<svg style="left:83px;top:400.5px" width="40" height="40" viewBox="0 0 40 40"><rect x="14" y="0" width="6.8" height="40" fill="#00239a"/><path d="M3,3.2 L11,0 H28.5 L36,5.2 Q26,6.5 19.5,6.5 Q12,5 3,3.2 Z" fill="#00239a"/><path d="M1,7 H38" stroke="#777" stroke-width="1"/><path d="M5,21.5 L12,19 H36 L31,21 Q26,23.5 22.5,24.5 V32 H12.5 V27 Q11,23 5,21.5 Z" fill="#00239a"/><path d="M25,25 v-5 M22.8,22 l2.2,-2.5 l2.2,2.5" fill="none" stroke="#d8d8e8" stroke-width="0.9"/><text x="26" y="37" font-size="15" fill="#00239a" stroke="#00239a" stroke-width="0.4" font-family="Liberation Sans,sans-serif">D</text></svg>
<div class="t" style="left:128px;top:414px;font-size:13.5px;color:#000;line-height:16px;">LineGaugeDatum_LeadPosition</div>
<div class="t" style="left:370px;top:414px;font-size:13.5px;color:#000;line-height:16px;width:83px;text-align:right;">51</div>
<div class="t" style="left:458px;top:414px;font-size:13.5px;color:#000;line-height:16px;width:82px;text-align:right;">8</div>
<div class="t" style="left:546px;top:414px;font-size:13.5px;color:#000;line-height:16px;width:82px;text-align:right;">68</div>
<div class="abs" style="left:70px;top:460px;width:13px;height:1px;background:#555;"></div>
<svg style="left:83px;top:439.5px" width="40" height="40" viewBox="0 0 40 40"><rect x="0.5" y="0.5" width="39" height="39" fill="#fff" stroke="#3d52b5" stroke-width="1"/><path d="M0.5,10.5 H39.5" stroke="#3d52b5" stroke-width="1"/><text x="20" y="8.8" font-size="8.6" text-anchor="middle" fill="#3d52b5" font-family="Liberation Sans,sans-serif">BASIC</text><path d="M10.5,14.5 L4,22 L10.5,29.5 M19,14.5 L25.5,22 L19,29.5 M17.2,14 L12,30" fill="none" stroke="#00239a" stroke-width="1.7"/><path d="M27,14 H37" stroke="#00239a" stroke-width="1.3" stroke-dasharray="3.2 1"/><path d="M30,19.5 H37" stroke="#00239a" stroke-width="1.3" stroke-dasharray="3.2 1"/><path d="M30,24.5 H37" stroke="#00239a" stroke-width="1.3" stroke-dasharray="3.2 1"/><path d="M27,30 H37" stroke="#00239a" stroke-width="1.3" stroke-dasharray="3.2 1"/><path d="M3.5,35.5 H37" stroke="#00239a" stroke-width="1.3" stroke-dasharray="3.4 1.6"/></svg>
<div class="t" style="left:128px;top:454px;font-size:13.5px;color:#000;line-height:16px;">Inspection Status</div>
<div class="t" style="left:370px;top:454px;font-size:13.5px;color:#000;line-height:16px;width:83px;text-align:right;">47</div>
<div class="t" style="left:458px;top:454px;font-size:13.5px;color:#000;line-height:16px;width:82px;text-align:right;">0</div>
<div class="t" style="left:546px;top:454px;font-size:13.5px;color:#000;line-height:16px;width:82px;text-align:right;">53</div>
<div class="abs" style="left:70px;top:500px;width:13px;height:1px;background:#555;"></div>
<svg style="left:85px;top:489.2px" width="35" height="22" viewBox="0 0 35 22"><rect x="0" y="0" width="35" height="22" rx="1" fill="#00239a"/><rect x="2.4" y="2.6" width="9.4" height="15.2" fill="#fff"/><rect x="12.8" y="2.6" width="9.4" height="15.2" fill="#fff"/><rect x="23.2" y="2.6" width="9.4" height="15.2" fill="#fff"/><text x="6.9" y="15.8" font-size="15.5" text-anchor="middle" fill="#5a5a5a" stroke="#5a5a5a" stroke-width="0.35" font-family="Liberation Sans,sans-serif">0</text><text x="17.5" y="15.8" font-size="15.5" text-anchor="middle" fill="#5a5a5a" stroke="#5a5a5a" stroke-width="0.35" font-family="Liberation Sans,sans-serif">0</text><path d="M24,9.7 H32.5" stroke="#9aa" stroke-width="0.7"/><text x="28.1" y="8.6" font-size="9" font-weight="bold" text-anchor="middle" fill="#555" font-family="Liberation Sans,sans-serif">o</text><text x="28.1" y="18.2" font-size="10.5" font-weight="bold" text-anchor="middle" fill="#444" font-family="Liberation Sans,sans-serif">7</text></svg>
<div class="t" style="left:128px;top:494px;font-size:13.5px;color:#000;line-height:16px;">Counter_Run</div>
<div class="t" style="left:370px;top:494px;font-size:13.5px;color:#000;line-height:16px;width:83px;text-align:right;">47</div>
<div class="t" style="left:458px;top:494px;font-size:13.5px;color:#000;line-height:16px;width:82px;text-align:right;">0</div>
<div class="t" style="left:546px;top:494px;font-size:13.5px;color:#000;line-height:16px;width:82px;text-align:right;">3</div>
<div class="abs" style="left:74px;top:540px;width:9px;height:1px;background:#555;"></div>
<svg style="left:90px;top:523.0px" width="27" height="36" viewBox="0 0 27 36"><path d="M2,17.5 V4 H17" fill="none" stroke="#3fe21d" stroke-width="3.4"/><path d="M16,-1.8 L24.5,4 L16,9.8 Z" fill="#3fe21d"/><path d="M1.8,18 V28.2 H18 V25 L24.5,29.6 L18,34 V31 H0.3 V18 Z" fill="#ff0a0a" stroke="#a80000" stroke-width="0.9"/></svg>
<svg style="left:63px;top:534.2px" width="12" height="12" viewBox="0 0 12 12"><circle cx="6" cy="6" r="5.7" fill="#000"/><rect x="2.8" y="5.1" width="6.4" height="1.9" fill="#fff"/></svg>
<div class="t" style="left:128px;top:534px;font-size:13.5px;color:#5c0000;line-height:16px;">Pass Fail</div>
<div class="t" style="left:370px;top:534px;font-size:13.5px;color:#000;line-height:16px;width:83px;text-align:right;">47</div>
<div class="t" style="left:458px;top:534px;font-size:13.5px;color:#000;line-height:16px;width:82px;text-align:right;">20</div>
<div class="t" style="left:546px;top:534px;font-size:13.5px;color:#000;line-height:16px;width:82px;text-align:right;">193</div>
<div class="abs" style="left:98px;top:580px;width:8px;height:1px;background:#555;"></div>
<svg style="left:108px;top:562.5px" width="35" height="35" viewBox="0 0 35 35"><circle cx="17.5" cy="17.5" r="17.5" fill="#3a3a3a"/><path d="M8,10.5 h4.2 l5.3,7 l-5.3,7 h-4.2 l5.3,-7 z M17,10.5 h4.2 l5.3,7 l-5.3,7 h-4.2 l5.3,-7 z" fill="#fff"/></svg>
<svg style="left:86.7px;top:574.2px" width="12" height="12" viewBox="0 0 12 12"><circle cx="6" cy="6" r="5.7" fill="#000"/><rect x="2.8" y="5.1" width="6.4" height="1.9" fill="#fff"/></svg>
<div class="t" style="left:151px;top:574px;font-size:13.5px;color:#000;line-height:16px;">Pass</div>
<div class="t" style="left:370px;top:574px;font-size:13.5px;color:#000;line-height:16px;width:83px;text-align:right;">27</div>
<div class="t" style="left:458px;top:574px;font-size:13.5px;color:#000;line-height:16px;width:82px;text-align:right;">0</div>
<div class="t" style="left:546px;top:574px;font-size:13.5px;color:#000;line-height:16px;width:82px;text-align:right;">0</div>
<div class="abs" style="left:117px;top:620px;width:13px;height:1px;background:#555;"></div>
<svg style="left:132px;top:609.2px" width="35" height="22" viewBox="0 0 35 22"><rect x="0" y="0" width="35" height="22" rx="1" fill="#00239a"/><rect x="2.4" y="2.6" width="9.4" height="15.2" fill="#fff"/><rect x="12.8" y="2.6" width="9.4" height="15.2" fill="#fff"/><rect x="23.2" y="2.6" width="9.4" height="15.2" fill="#fff"/><text x="6.9" y="15.8" font-size="15.5" text-anchor="middle" fill="#5a5a5a" stroke="#5a5a5a" stroke-width="0.35" font-family="Liberation Sans,sans-serif">0</text><text x="17.5" y="15.8" font-size="15.5" text-anchor="middle" fill="#5a5a5a" stroke="#5a5a5a" stroke-width="0.35" font-family="Liberation Sans,sans-serif">0</text><path d="M24,9.7 H32.5" stroke="#9aa" stroke-width="0.7"/><text x="28.1" y="8.6" font-size="9" font-weight="bold" text-anchor="middle" fill="#555" font-family="Liberation Sans,sans-serif">o</text><text x="28.1" y="18.2" font-size="10.5" font-weight="bold" text-anchor="middle" fill="#444" font-family="Liberation Sans,sans-serif">7</text></svg>
<div class="t" style="left:175px;top:614px;font-size:13.5px;color:#000;line-height:16px;">Counter_Pass</div>
<div class="t" style="left:370px;top:614px;font-size:13.5px;color:#000;line-height:16px;width:83px;text-align:right;">27</div>
<div class="t" style="left:458px;top:614px;font-size:13.5px;color:#000;line-height:16px;width:82px;text-align:right;">0</div>
<div class="t" style="left:546px;top:614px;font-size:13.5px;color:#000;line-height:16px;width:82px;text-align:right;">0</div>
<div class="abs" style="left:117px;top:660px;width:13px;height:1px;background:#555;"></div>
<svg style="left:130px;top:645.0px" width="40" height="30" viewBox="0 0 40 30"><path d="M30.5,-8 V-13.5 H8.5 V13.5 H30.5 V8" fill="none" stroke="#00239a" stroke-width="2.4" transform="translate(0,15)"/><rect x="0" y="11" width="9" height="8.2" fill="#00239a"/><path d="M24,15.2 H36 M29.5,8.2 L37.2,15.2 L29.5,22.2" fill="none" stroke="#00239a" stroke-width="2.6"/><circle cx="18" cy="15.2" r="6" fill="#4a4a4a"/></svg>
<div class="t" style="left:175px;top:654px;font-size:13.5px;color:#000;line-height:16px;">Pass Output</div>
<div class="t" style="left:370px;top:654px;font-size:13.5px;color:#000;line-height:16px;width:83px;text-align:right;">27</div>
<div class="t" style="left:458px;top:654px;font-size:13.5px;color:#000;line-height:16px;width:82px;text-align:right;">0</div>
<div class="t" style="left:546px;top:654px;font-size:13.5px;color:#000;line-height:16px;width:82px;text-align:right;">0</div>
<div class="abs" style="left:98px;top:700px;width:8px;height:1px;background:#555;"></div>
<svg style="left:108px;top:682.5px" width="35" height="35" viewBox="0 0 35 35"><circle cx="17.5" cy="17.5" r="17.5" fill="#3a3a3a"/><path d="M8,10.5 h4.2 l5.3,7 l-5.3,7 h-4.2 l5.3,-7 z M17,10.5 h4.2 l5.3,7 l-5.3,7 h-4.2 l5.3,-7 z" fill="#fff"/></svg>
<svg style="left:86.7px;top:694.2px" width="12" height="12" viewBox="0 0 12 12"><circle cx="6" cy="6" r="5.7" fill="#000"/><rect x="2.8" y="5.1" width="6.4" height="1.9" fill="#fff"/></svg>
<div class="t" style="left:151px;top:694px;font-size:13.5px;color:#000;line-height:16px;">Fail</div>
<div class="t" style="left:370px;top:694px;font-size:13.5px;color:#000;line-height:16px;width:83px;text-align:right;">20</div>
<div class="t" style="left:458px;top:694px;font-size:13.5px;color:#000;line-height:16px;width:82px;text-align:right;">0</div>
<div class="t" style="left:546px;top:694px;font-size:13.5px;color:#000;line-height:16px;width:82px;text-align:right;">170</div>
<div class="abs" style="left:117px;top:740px;width:13px;height:1px;background:#555;"></div>
<svg style="left:132px;top:729.2px" width="35" height="22" viewBox="0 0 35 22"><rect x="0" y="0" width="35" height="22" rx="1" fill="#00239a"/><rect x="2.4" y="2.6" width="9.4" height="15.2" fill="#fff"/><rect x="12.8" y="2.6" width="9.4" height="15.2" fill="#fff"/><rect x="23.2" y="2.6" width="9.4" height="15.2" fill="#fff"/><text x="6.9" y="15.8" font-size="15.5" text-anchor="middle" fill="#5a5a5a" stroke="#5a5a5a" stroke-width="0.35" font-family="Liberation Sans,sans-serif">0</text><text x="17.5" y="15.8" font-size="15.5" text-anchor="middle" fill="#5a5a5a" stroke="#5a5a5a" stroke-width="0.35" font-family="Liberation Sans,sans-serif">0</text><path d="M24,9.7 H32.5" stroke="#9aa" stroke-width="0.7"/><text x="28.1" y="8.6" font-size="9" font-weight="bold" text-anchor="middle" fill="#555" font-family="Liberation Sans,sans-serif">o</text><text x="28.1" y="18.2" font-size="10.5" font-weight="bold" text-anchor="middle" fill="#444" font-family="Liberation Sans,sans-serif">7</text></svg>
<div class="t" style="left:175px;top:734px;font-size:13.5px;color:#000;line-height:16px;">Counter_Fail</div>
<div class="t" style="left:370px;top:734px;font-size:13.5px;color:#000;line-height:16px;width:83px;text-align:right;">20</div>
<div class="t" style="left:458px;top:734px;font-size:13.5px;color:#000;line-height:16px;width:82px;text-align:right;">0</div>
<div class="t" style="left:546px;top:734px;font-size:13.5px;color:#000;line-height:16px;width:82px;text-align:right;">2</div>
<div class="abs" style="left:117px;top:780px;width:13px;height:1px;background:#555;"></div>
<svg style="left:130px;top:765.0px" width="40" height="30" viewBox="0 0 40 30"><path d="M30.5,-8 V-13.5 H8.5 V13.5 H30.5 V8" fill="none" stroke="#00239a" stroke-width="2.4" transform="translate(0,15)"/><rect x="0" y="11" width="9" height="8.2" fill="#00239a"/><path d="M24,15.2 H36 M29.5,8.2 L37.2,15.2 L29.5,22.2" fill="none" stroke="#00239a" stroke-width="2.6"/><circle cx="18" cy="15.2" r="6" fill="#4a4a4a"/></svg>
<div class="t" style="left:175px;top:774px;font-size:13.5px;color:#000;line-height:16px;">Fail Output</div>
<div class="t" style="left:370px;top:774px;font-size:13.5px;color:#000;line-height:16px;width:83px;text-align:right;">20</div>
<div class="t" style="left:458px;top:774px;font-size:13.5px;color:#000;line-height:16px;width:82px;text-align:right;">0</div>
<div class="t" style="left:546px;top:774px;font-size:13.5px;color:#000;line-height:16px;width:82px;text-align:right;">3</div>
<div class="abs" style="left:117px;top:820px;width:13px;height:1px;background:#555;"></div>
<svg style="left:133px;top:802.5px" width="36" height="36" viewBox="0 0 36 36"><path d="M0,0 h10.5 l4,4 v10.5 h-14.5 z" fill="#00239a"/><path d="M10.5,0 v4 h4" fill="#c9d0f0"/><path d="M20,19.5 h10.5 l4,4 v10.5 h-14.5 z" fill="#00239a"/><path d="M30.5,19.5 v4 h4" fill="#c9d0f0"/><path d="M6.5,17 v9.5 h7" fill="none" stroke="#444" stroke-width="2"/><path d="M12.5,22.5 l5.5,4 l-5.5,4 z" fill="#444"/></svg>
<div class="t" style="left:175px;top:814px;font-size:13.5px;color:#000;line-height:16px;">Image Buffers</div>
<div class="t" style="left:370px;top:814px;font-size:13.5px;color:#000;line-height:16px;width:83px;text-align:right;">20</div>
<div class="t" style="left:458px;top:814px;font-size:13.5px;color:#000;line-height:16px;width:82px;text-align:right;">0</div>
<div class="t" style="left:546px;top:814px;font-size:13.5px;color:#000;line-height:16px;width:82px;text-align:right;">164</div>
<div class="abs" style="left:70px;top:860px;width:13px;height:1px;background:#555;"></div>
<svg style="left:85px;top:842.5px" width="36" height="36" viewBox="0 0 36 36"><path d="M0,0 h10.5 l4,4 v10.5 h-14.5 z" fill="#00239a"/><path d="M10.5,0 v4 h4" fill="#c9d0f0"/><path d="M20,19.5 h10.5 l4,4 v10.5 h-14.5 z" fill="#00239a"/><path d="M30.5,19.5 v4 h4" fill="#c9d0f0"/><path d="M6.5,17 v9.5 h7" fill="none" stroke="#444" stroke-width="2"/><path d="M12.5,22.5 l5.5,4 l-5.5,4 z" fill="#444"/></svg>
<div class="t" style="left:128px;top:854px;font-size:13.5px;color:#000;line-height:16px;">Lot Images</div>
<div class="t" style="left:370px;top:854px;font-size:13.5px;color:#000;line-height:16px;width:83px;text-align:right;">47</div>
<div class="t" style="left:458px;top:854px;font-size:13.5px;color:#000;line-height:16px;width:82px;text-align:right;">0</div>
<div class="t" style="left:546px;top:854px;font-size:13.5px;color:#000;line-height:16px;width:82px;text-align:right;">299</div>
<div class="abs" style="left:50px;top:900px;width:8px;height:1px;background:#555;"></div>
<svg style="left:62px;top:880.7px" width="34" height="38" viewBox="0 0 34 38"><rect x="1" y="0.8" width="31.4" height="36" rx="3" fill="#fff" stroke="#8493cf" stroke-width="1.3"/><rect x="4" y="4" width="25" height="23.5" fill="#00239a"/></svg>
<svg style="left:39.5px;top:894.2px" width="12" height="12" viewBox="0 0 12 12"><circle cx="6" cy="6" r="5.7" fill="#000"/><rect x="2.8" y="5.1" width="6.4" height="1.9" fill="#fff"/><rect x="5.05" y="2.8" width="1.9" height="6.4" fill="#fff"/></svg>
<div class="t" style="left:104px;top:894px;font-size:13.5px;color:#000;line-height:16px;">Reset Counts</div>
<div class="abs" style="left:50px;top:940px;width:8px;height:1px;background:#555;"></div>
<svg style="left:62px;top:920.7px" width="34" height="38" viewBox="0 0 34 38"><rect x="1" y="0.8" width="31.4" height="36" rx="3" fill="#fff" stroke="#8493cf" stroke-width="1.3"/><rect x="4" y="4" width="25" height="23.5" fill="#00239a"/></svg>
<svg style="left:39.5px;top:934.2px" width="12" height="12" viewBox="0 0 12 12"><circle cx="6" cy="6" r="5.7" fill="#000"/><rect x="2.8" y="5.1" width="6.4" height="1.9" fill="#fff"/><rect x="5.05" y="2.8" width="1.9" height="6.4" fill="#fff"/></svg>
<div class="t" style="left:104px;top:934px;font-size:13.5px;color:#000;line-height:16px;">Abort Task</div>
<div class="abs" style="left:369px;top:160px;width:1px;height:785px;background:#555;"></div>
</div>
<div class="abs" style="left:10px;top:133px;width:1px;height:812px;background:#6e6e6e;"></div>
<div class="abs" style="left:10px;top:133px;width:693px;height:1px;background:#7b8794;"></div>
<div class="abs" style="left:11px;top:134px;width:358px;height:24px;background:#f0f0f0;"></div>
<div class="abs" style="left:370px;top:133px;width:88px;height:26px;background:#f0f0f0;border:1px solid #8c99a6;box-shadow:inset 1px 1px 0 #fff"></div>
<div class="t" style="left:370px;top:138px;font-size:13.5px;color:#000;line-height:16px;width:88px;text-align:center;">Run Counts</div>
<div class="abs" style="left:458px;top:133px;width:88px;height:26px;background:#f0f0f0;border:1px solid #8c99a6;box-shadow:inset 1px 1px 0 #fff"></div>
<div class="t" style="left:458px;top:138px;font-size:13.5px;color:#000;line-height:16px;width:88px;text-align:center;">Fail Counts</div>
<div class="abs" style="left:546px;top:133px;width:87px;height:26px;background:#f0f0f0;border:1px solid #8c99a6;box-shadow:inset 1px 1px 0 #fff"></div>
<div class="t" style="left:546px;top:138px;font-size:13.5px;color:#000;line-height:16px;width:87px;text-align:center;">Time</div>
<div class="abs" style="left:633px;top:133px;width:70px;height:26px;background:#f0f0f0;border:1px solid #8c99a6;box-shadow:inset 1px 1px 0 #fff"></div>
<div class="abs" style="left:10px;top:159px;width:674px;height:2px;background:#6e6e6e;"></div>
<svg style="left:14px;top:136px" width="17" height="17" viewBox="0 0 17 17"><rect x="0.5" y="0.5" width="16" height="16" fill="#e6e8f2" stroke="#b9bfd8" stroke-width="1"/><path d="M1,1 L16,16" stroke="#f0503c" stroke-width="1.4"/></svg>
<div class="abs" style="left:692px;top:181px;width:2px;height:509px;background:#7a7a7a;"></div>
<div class="abs" style="left:11px;top:950px;width:86px;height:26px;background:#f0f0f0;border:1px solid #e2e2e2"></div>
<div class="abs" style="left:96px;top:948px;width:103px;height:30px;background:#f7f7f7;border:1px solid #e6e6e6;border-top:none"></div>
<svg style="left:17px;top:952px" width="22" height="22" viewBox="0 0 22 22"><path d="M1,2 V16 Q1,21 6,21 H20 V2 l-2.5,1 l-1,4 q-6,5 -12,0 l-1,-4 z" fill="#00239a"/><path d="M4.5,1 l3,5 M10.5,0 v6 M16.5,1 l-3,5 M5,8 l4,3 M16,8 l-4,3" stroke="#fff" stroke-width="1.2"/><rect x="5" y="15.5" width="12" height="2.6" fill="#c8d0f2"/></svg>
<div class="t" style="left:43px;top:957px;font-size:13.5px;color:#000;line-height:16px;">Settings</div>
<svg style="left:104px;top:957px" width="22" height="16" viewBox="0 0 22 16"><path d="M6,2 l3.5,-0.8 l0.8,-1 h5 v8 h-9.3 z" fill="#00239a"/><path d="M10.5,8 v2.5 M3.5,13 v-2.5 h14 v2.5" fill="none" stroke="#cfcfcf" stroke-width="1"/><rect x="0.5" y="12" width="5.5" height="3.5" fill="#fff" stroke="#d4d4d4" stroke-width="0.8"/><rect x="7.8" y="12" width="5.5" height="3.5" fill="#fff" stroke="#d4d4d4" stroke-width="0.8"/><rect x="15" y="12" width="5.5" height="3.5" fill="#fff" stroke="#d4d4d4" stroke-width="0.8"/></svg>
<div class="t" style="left:129px;top:959px;font-size:13.5px;color:#000;line-height:16px;">Inspection</div>
<div class="abs" style="left:711px;top:125px;width:722px;height:857px;background:transparent;border-top:1px solid #828282;border-left:1px solid #828282;box-shadow:inset 1px 1px 0 #fff"></div>
<div class="abs" style="left:1433px;top:125px;width:3px;height:857px;background:#8a8a8a;"></div>
<div class="abs" style="left:713px;top:131px;width:719px;height:1px;background:#7c7c7c;"></div>
<div class="abs" style="left:719px;top:135px;width:709px;height:517px;background:#f0f0f0;border:1px solid #7c7c7c;box-shadow:inset 1px 1px 0 #fff, 1px 1px 0 #fff"></div>
<div class="abs" style="left:726px;top:142px;width:695px;height:18px;background:#fff;"></div>
<div class="t" style="left:737px;top:143px;font-size:12px;color:#000;line-height:16px;">/cf/Images/Sample Bulb - 10 Fail.png</div>
<div class="t" style="left:1200px;top:143px;font-size:12px;color:#000;line-height:16px;width:196px;text-align:right;">X 207,668,&nbsp; Y 481,244</div>
<svg style="left:1402px;top:143px" width="16" height="16" viewBox="0 0 16 16"><circle cx="7.5" cy="7.5" r="6.3" fill="#fff" stroke="#d0d0d0" stroke-width="1"/><path d="M5,3.6 h5 M7.5,3.6 v3 M5,7 h5" stroke="#00239a" stroke-width="1.6" fill="none"/><path d="M7.5,7 v5" stroke="#7d8fd8" stroke-width="1.4"/></svg>
<div class="abs" style="left:771px;top:160px;width:650px;height:487px;background:#b4b4b4;"></div>
<div class="abs" style="left:772px;top:161px;width:646px;height:484px;background:#fff;"></div>
<svg style="left:772px;top:161px" width="646" height="484" viewBox="0 0 646 484"><defs><filter id="bl1" x="-5%" y="-5%" width="110%" height="110%"><feGaussianBlur stdDeviation="0.7"/></filter><filter id="bl2" x="-10%" y="-10%" width="120%" height="120%"><feGaussianBlur stdDeviation="2"/></filter><filter id="bl3" x="-20%" y="-50%" width="140%" height="200%"><feGaussianBlur stdDeviation="3.5"/></filter><filter id="bl8" x="-20%" y="-50%" width="140%" height="200%"><feGaussianBlur stdDeviation="9"/></filter><linearGradient id="gbot" x1="0" y1="0" x2="0" y2="1"><stop offset="0" stop-color="#c4c4c4"/><stop offset="0.12" stop-color="#e6e6e6"/><stop offset="0.38" stop-color="#d0d0d0"/><stop offset="0.6" stop-color="#8a8a8a"/><stop offset="0.74" stop-color="#2a2a2a"/><stop offset="0.8" stop-color="#0e0e0e"/><stop offset="1" stop-color="#0a0a0a"/></linearGradient><linearGradient id="gbotr" x1="0" y1="0" x2="1" y2="0"><stop offset="0" stop-color="#fff" stop-opacity="0"/><stop offset="0.5" stop-color="#fff" stop-opacity="0.25"/><stop offset="1" stop-color="#fff" stop-opacity="0.5"/></linearGradient><linearGradient id="gneckt" x1="0" y1="0" x2="0" y2="1"><stop offset="0" stop-color="#0c0c0c"/><stop offset="0.2" stop-color="#0c0c0c"/><stop offset="0.3" stop-color="#a0a0a0"/><stop offset="0.48" stop-color="#f4f4f4"/><stop offset="0.56" stop-color="#5a5a5a"/><stop offset="0.64" stop-color="#1a1a1a"/><stop offset="0.74" stop-color="#d8d8d8"/><stop offset="0.9" stop-color="#fafafa"/><stop offset="1" stop-color="#bbb"/></linearGradient><linearGradient id="gneckb" x1="0" y1="0" x2="0" y2="1"><stop offset="0" stop-color="#9a9a9a"/><stop offset="0.15" stop-color="#e2e2e2"/><stop offset="0.4" stop-color="#c9c9c9"/><stop offset="0.6" stop-color="#fafafa"/><stop offset="0.72" stop-color="#f4f4f4"/><stop offset="0.8" stop-color="#222"/><stop offset="1" stop-color="#0c0c0c"/></linearGradient><linearGradient id="gint" x1="0" y1="0" x2="1" y2="0"><stop offset="0" stop-color="#d4d4d4"/><stop offset="0.06" stop-color="#ededed"/><stop offset="0.3" stop-color="#f6f6f6"/><stop offset="0.975" stop-color="#fcfcfc"/><stop offset="1" stop-color="#cfcfcf"/></linearGradient><linearGradient id="gcap" x1="0" y1="0" x2="1" y2="0"><stop offset="0" stop-color="#0e0e0e"/><stop offset="0.18" stop-color="#4a4a4a"/><stop offset="0.4" stop-color="#1c1c1c"/><stop offset="0.68" stop-color="#454545"/><stop offset="1" stop-color="#161616"/></linearGradient><clipPath id="bandclip"><path d="M78.0,300.0 L614.0,300.0 L614.0,347.0 L318.0,350.5 L228.0,349.5 Q168.0,348.0 130.0,343.0 Q100.0,338.0 78.0,335.0 Z"/></clipPath><clipPath id="imgclip"><rect x="0" y="0" width="646" height="484"/></clipPath></defs><g clip-path="url(#imgclip)"><rect x="0" y="0" width="646" height="484" fill="#fff"/><ellipse cx="28" cy="399" rx="20" ry="38" fill="#f4f4f4" filter="url(#bl8)"/><ellipse cx="218" cy="394" rx="26" ry="20" fill="#f5f5f5" filter="url(#bl8)"/><ellipse cx="228" cy="451" rx="30" ry="18" fill="#f7f7f7" filter="url(#bl8)"/><ellipse cx="190" cy="361" rx="18" ry="12" fill="#f3f3f3" filter="url(#bl8)"/><ellipse cx="78" cy="469" rx="16" ry="10" fill="#f8f8f8" filter="url(#bl8)"/><path d="M88.0,119.0 Q128.0,109.0 163.0,111.0 L612.0,127.0 V339 L158.0,339.0 L88.0,319.0 Z" fill="url(#gint)"/><path d="M78.0,300.0 L614.0,300.0 L614.0,347.0 L318.0,350.5 L228.0,349.5 Q168.0,348.0 130.0,343.0 Q100.0,338.0 78.0,335.0 Z" fill="url(#gbot)"/><rect x="228" y="302" width="386" height="26" fill="url(#gbotr)"/><g clip-path="url(#bandclip)"><ellipse cx="123" cy="340" rx="100" ry="13" fill="#111" filter="url(#bl3)" opacity="0.9"/></g><path d="M0,106 H86 L63,157 H0 Z" fill="url(#gneckt)"/><rect x="0" y="157" width="50" height="137" fill="#fbfbfb"/><path d="M0,300 H78 V336 H0 Z" fill="url(#gneckb)"/><rect x="3" y="191" width="13" height="26" fill="#9e9e9e" opacity="0.55" filter="url(#bl2)"/><rect x="3" y="237" width="8" height="18" fill="#9e9e9e" opacity="0.55" filter="url(#bl2)"/><rect x="3" y="269" width="10" height="24" fill="#9e9e9e" opacity="0.55" filter="url(#bl2)"/><path d="M106.0,125.0 Q128.0,115.0 168.0,114.0 L318.0,120.0 L600.0,126.5" fill="none" stroke="#a4a4a4" stroke-width="6" filter="url(#bl1)"/><g filter="url(#bl1)" fill="none" stroke="#0a0a0a" stroke-linecap="round" stroke-linejoin="round"><path d="M90.0,106.0 Q68.0,124.0 54.0,153.0 Q39.0,187.0 39.5,224.0 Q40.0,259.0 54.0,285.0 Q66.0,309.0 84.0,327.0 L102.0,335.0 L94.0,309.0 L92.0,294.0 L92.0,169.0 Q92.0,141.0 112.0,125.0 L108.0,107.0 Z" fill="#0a0a0a" stroke-width="2"/><path d="M102.0,108.0 L134.0,111.0 L130.0,118.0 L109.0,130.0 Z" fill="#0a0a0a" stroke="none"/><path d="M64.0,111.8 Q108.0,105.5 153.0,106.6 L318.0,111.7 L600.0,118.0 Q624.0,119.0 646.0,143.0" stroke-width="11"/><path d="M96.0,132.0 Q123.0,116.5 168.0,115.0 L318.0,122.2 L594.0,128.3 Q613.0,129.0 613.5,149.0 L613.5,317.0 Q613.0,337.0 594.0,338.5 L594.0,335.0 Q609.5,334.0 609.5,317.0 L609.5,149.0 Q609.5,132.5 594.0,132.0 L318.0,126.2 L168.0,123.0 Q128.0,125.0 100.0,141.0 Z" fill="#121212" stroke="none"/><path d="M64.0,331.0 Q98.0,337.0 130.0,340.0 Q188.0,346.0 228.0,346.3 L318.0,347.0 L600.0,343.0 Q628.0,341.0 646.0,326.0" stroke-width="7"/><path d="M0.0,152.0 L58.0,152.5" stroke-width="8"/><path d="M88.0,157.0 L146.0,157.5 Q161.5,158.0 161.5,174.0 L161.5,228.0" stroke-width="8.5"/><path d="M0.0,296.3 L524.0,296.3 Q542.0,296.0 543.0,279.0 L544.5,229.0" stroke-width="6"/><path d="M544.5,239.0 L544.0,269.0" stroke-width="8.5"/><path d="M536.5,218.5 H546 V227 H536.5 Z" stroke-width="2.5" fill="#0a0a0a"/><path d="M118.0,214.5 L178.0,230.0" stroke-width="1.8" stroke="#1a1a1a"/><path d="M516.0,220.0 Q526.0,226.5 536.0,225.5" stroke-width="1.6" stroke="#1a1a1a"/><path d="M548.0,225.0 L571.0,223.5" stroke-width="2.2" stroke="#1a1a1a"/></g><path d="M613.0,115.0 Q630.0,123.0 647.0,143.0 V326 Q630.0,343.0 613.0,348.0 Z" fill="url(#gcap)" filter="url(#bl1)"/><path d="M614.0,116.0 Q630.0,124.0 647.0,144.0" fill="none" stroke="#0a0a0a" stroke-width="5" filter="url(#bl1)"/><path d="M614.0,347.0 Q630.0,342.0 647.0,325.0" fill="none" stroke="#0a0a0a" stroke-width="5" filter="url(#bl1)"/><ellipse cx="617.5" cy="234" rx="1.9" ry="27" fill="#f6f6f6" filter="url(#bl1)"/><path d="M74.0,131.0 Q54.0,179.0 55.0,224.0 Q56.0,264.0 70.0,291.0" fill="none" stroke="#8a8a8a" stroke-width="2.2" filter="url(#bl1)"/><path d="M84.0,139.0 Q70.0,179.0 70.0,224.0 Q71.0,259.0 80.0,287.0" fill="none" stroke="#777" stroke-width="1.8" filter="url(#bl1)"/><path d="M4.0,323.0 L66.0,315.0" stroke="#fff" stroke-width="7" stroke-linecap="round" filter="url(#bl2)" opacity="0.0"/><circle cx="269" cy="158" r="0.5" fill="#9a9a9a"/><circle cx="517" cy="149" r="1.1" fill="#9a9a9a"/><circle cx="561" cy="168" r="0.5" fill="#c4c4c4"/><circle cx="316" cy="172" r="1.1" fill="#c4c4c4"/><circle cx="137" cy="222" r="0.6" fill="#9a9a9a"/><circle cx="395" cy="196" r="0.6" fill="#9a9a9a"/><circle cx="385" cy="156" r="0.9" fill="#b5b5b5"/><circle cx="377" cy="223" r="1.1" fill="#b5b5b5"/><circle cx="159" cy="223" r="0.6" fill="#888"/><circle cx="157" cy="245" r="1.1" fill="#9a9a9a"/><circle cx="416" cy="211" r="1.1" fill="#c4c4c4"/><circle cx="495" cy="207" r="0.9" fill="#888"/><circle cx="257" cy="257" r="0.6" fill="#9a9a9a"/><circle cx="394" cy="216" r="0.7" fill="#c4c4c4"/><circle cx="251" cy="286" r="0.5" fill="#c4c4c4"/><circle cx="190" cy="188" r="0.9" fill="#c4c4c4"/><circle cx="128" cy="238" r="1.1" fill="#888"/><circle cx="277" cy="189" r="0.9" fill="#c4c4c4"/><circle cx="142" cy="149" r="0.7" fill="#c4c4c4"/><circle cx="455" cy="145" r="0.7" fill="#c4c4c4"/><circle cx="250" cy="194" r="0.7" fill="#9a9a9a"/><circle cx="576" cy="190" r="1.1" fill="#9a9a9a"/><circle cx="354" cy="169" r="0.7" fill="#b5b5b5"/><circle cx="476" cy="196" r="0.9" fill="#9a9a9a"/><circle cx="191" cy="197" r="0.7" fill="#b5b5b5"/><circle cx="516" cy="268" r="0.7" fill="#c4c4c4"/><circle cx="599" cy="240" r="0.9" fill="#b5b5b5"/><circle cx="183" cy="162" r="0.6" fill="#b5b5b5"/><circle cx="114" cy="263" r="0.6" fill="#888"/><circle cx="248" cy="157" r="1.1" fill="#888"/><circle cx="412" cy="184" r="0.6" fill="#9a9a9a"/><circle cx="335" cy="269" r="1.1" fill="#c4c4c4"/><circle cx="306" cy="196" r="0.9" fill="#c4c4c4"/><circle cx="139" cy="145" r="0.6" fill="#c4c4c4"/><circle cx="189" cy="187" r="0.5" fill="#9a9a9a"/><circle cx="108" cy="158" r="0.5" fill="#888"/><circle cx="414" cy="146" r="0.6" fill="#c4c4c4"/><circle cx="182" cy="174" r="0.7" fill="#888"/><circle cx="344" cy="153" r="0.9" fill="#c4c4c4"/><circle cx="347" cy="183" r="0.6" fill="#9a9a9a"/><circle cx="481" cy="249" r="0.9" fill="#b5b5b5"/><circle cx="365" cy="167" r="1.1" fill="#888"/><circle cx="181" cy="219" r="0.5" fill="#888"/><circle cx="595" cy="268" r="0.7" fill="#888"/><circle cx="560" cy="190" r="0.6" fill="#888"/><circle cx="425" cy="229" r="0.6" fill="#b5b5b5"/><circle cx="516" cy="249" r="0.6" fill="#b5b5b5"/><circle cx="366" cy="190" r="0.5" fill="#9a9a9a"/><circle cx="501" cy="208" r="0.6" fill="#888"/><circle cx="331" cy="279" r="0.7" fill="#888"/><circle cx="148" cy="151" r="0.9" fill="#b5b5b5"/><circle cx="276" cy="209" r="1.1" fill="#9a9a9a"/><circle cx="347" cy="236" r="0.5" fill="#9a9a9a"/><circle cx="561" cy="255" r="0.6" fill="#c4c4c4"/><circle cx="551" cy="202" r="0.7" fill="#9a9a9a"/><circle cx="507" cy="285" r="0.9" fill="#c4c4c4"/><circle cx="308" cy="281" r="0.6" fill="#b5b5b5"/><circle cx="603" cy="139" r="1.1" fill="#c4c4c4"/><circle cx="510" cy="158" r="1.1" fill="#c4c4c4"/><circle cx="435" cy="189" r="1.1" fill="#b5b5b5"/><circle cx="109" cy="325" r="0.6" fill="#666"/><circle cx="468" cy="306" r="0.6" fill="#666"/><circle cx="480" cy="307" r="0.6" fill="#666"/><circle cx="601" cy="308" r="0.6" fill="#666"/><circle cx="544" cy="304" r="0.6" fill="#666"/><circle cx="207" cy="317" r="0.6" fill="#666"/><circle cx="487" cy="312" r="0.6" fill="#666"/><circle cx="376" cy="326" r="0.6" fill="#666"/><circle cx="129" cy="324" r="0.6" fill="#666"/><circle cx="556" cy="322" r="0.6" fill="#666"/><circle cx="514" cy="317" r="0.6" fill="#666"/><circle cx="520" cy="328" r="0.6" fill="#666"/><circle cx="165" cy="307" r="0.6" fill="#666"/><circle cx="358" cy="327" r="0.6" fill="#666"/><circle cx="494" cy="320" r="0.6" fill="#666"/><circle cx="494" cy="307" r="0.6" fill="#666"/><circle cx="170" cy="320" r="0.6" fill="#666"/><circle cx="159" cy="305" r="0.6" fill="#666"/><circle cx="446" cy="318" r="0.6" fill="#666"/><circle cx="344" cy="325" r="0.6" fill="#666"/><circle cx="548" cy="305" r="0.6" fill="#666"/><circle cx="196" cy="304" r="0.6" fill="#666"/><circle cx="148" cy="316" r="0.6" fill="#666"/><circle cx="112" cy="328" r="0.6" fill="#666"/><circle cx="130" cy="312" r="0.6" fill="#666"/><circle cx="594" cy="320" r="0.6" fill="#666"/><circle cx="200" cy="311" r="0.6" fill="#666"/><circle cx="357" cy="326" r="0.6" fill="#666"/><circle cx="357" cy="310" r="0.6" fill="#666"/><circle cx="365" cy="328" r="0.6" fill="#666"/><circle cx="571" cy="329" r="0.6" fill="#666"/><circle cx="553" cy="309" r="0.6" fill="#666"/><circle cx="326" cy="315" r="0.6" fill="#666"/><circle cx="298" cy="312" r="0.6" fill="#666"/><circle cx="440" cy="315" r="0.6" fill="#666"/><circle cx="206" cy="311" r="0.6" fill="#666"/><circle cx="160" cy="325" r="0.6" fill="#666"/><circle cx="577" cy="321" r="0.6" fill="#666"/><circle cx="285" cy="310" r="0.6" fill="#666"/><circle cx="168" cy="316" r="0.6" fill="#666"/><circle cx="479" cy="306" r="0.6" fill="#666"/><circle cx="549" cy="308" r="0.6" fill="#666"/><circle cx="439" cy="309" r="0.6" fill="#666"/><circle cx="458" cy="331" r="0.6" fill="#666"/><circle cx="304" cy="315" r="0.6" fill="#666"/><circle cx="280" cy="306" r="0.6" fill="#666"/><circle cx="285" cy="312" r="0.6" fill="#666"/><circle cx="332" cy="323" r="0.6" fill="#666"/><circle cx="294" cy="317" r="0.6" fill="#666"/><circle cx="249" cy="330" r="0.6" fill="#666"/><rect x="176.5" y="167.5" width="339" height="105" fill="none" stroke="#f4c020" stroke-width="1.1"/><path d="M 243.0,207.5 L 247.0,221.6 L 248.5,207.8 L 252.5,221.9 L 254.0,208.0 L 258.0,222.2 L 259.5,208.3 L 263.5,222.4 L 265.0,208.5 L 269.0,222.7 L 270.5,208.8 L 274.5,222.9 L 276.0,209.1 L 280.0,223.2 L 281.5,209.3 L 285.5,223.5 L 287.0,209.6 L 291.0,223.7 L 292.5,209.8 L 296.5,224.0 L 298.0,210.1 L 302.0,224.2 L 303.5,210.4 L 307.5,224.5 L 309.0,210.6 L 313.0,224.8 L 314.5,210.9 L 318.5,225.0 L 320.0,211.2 L 324.0,225.3 L 325.5,211.4 L 329.5,225.5 L 331.0,211.7 L 335.0,225.8 L 336.5,211.9 L 340.5,226.1 L 342.0,212.2 L 346.0,226.3 L 347.5,212.5 L 351.5,226.6 L 353.0,212.7 L 357.0,226.8 L 358.5,213.0 L 362.5,227.1 L 364.0,213.2 L 368.0,227.4 L 369.5,213.5 L 373.5,227.6 L 375.0,213.8 L 379.0,227.9 L 380.5,214.0 L 384.5,228.2 L 386.0,214.3 L 390.0,228.4 L 391.5,214.5 L 395.5,228.7 L 397.0,214.8 L 401.0,228.9 L 402.5,215.1 L 406.5,229.2 L 408.0,215.3 L 412.0,229.5 L 413.5,215.6 L 417.5,229.7 L 419.0,215.8 L 423.0,230.0 L 424.5,216.1 L 428.5,230.2 L 430.0,216.4 L 434.0,230.5 L 435.5,216.6 L 439.5,230.8 L 441.0,216.9 L 445.0,231.0 L 446.5,217.2 L 450.5,231.3 L 452.0,217.4 L 456.0,231.5 L 457.5,217.7 L 461.5,231.8 L 463.0,217.9 L 467.0,232.1 L 468.5,218.2 L 472.5,232.3 L 474.0,218.5 L 478.0,232.6 L 479.5,218.7 L 483.5,232.8 L 485.0,219.0 L 489.0,233.1 L 490.5,219.2 L 494.5,233.4 L 496.0,219.5" fill="none" stroke-linejoin="round" stroke-linecap="round" stroke="#08a008" stroke-width="3.6"/><path d="M 243.0,207.5 L 247.0,221.6 L 248.5,207.8 L 252.5,221.9 L 254.0,208.0 L 258.0,222.2 L 259.5,208.3 L 263.5,222.4 L 265.0,208.5 L 269.0,222.7 L 270.5,208.8 L 274.5,222.9 L 276.0,209.1 L 280.0,223.2 L 281.5,209.3 L 285.5,223.5 L 287.0,209.6 L 291.0,223.7 L 292.5,209.8 L 296.5,224.0 L 298.0,210.1 L 302.0,224.2 L 303.5,210.4 L 307.5,224.5 L 309.0,210.6 L 313.0,224.8 L 314.5,210.9 L 318.5,225.0 L 320.0,211.2 L 324.0,225.3 L 325.5,211.4 L 329.5,225.5 L 331.0,211.7 L 335.0,225.8 L 336.5,211.9 L 340.5,226.1 L 342.0,212.2 L 346.0,226.3 L 347.5,212.5 L 351.5,226.6 L 353.0,212.7 L 357.0,226.8 L 358.5,213.0 L 362.5,227.1 L 364.0,213.2 L 368.0,227.4 L 369.5,213.5 L 373.5,227.6 L 375.0,213.8 L 379.0,227.9 L 380.5,214.0 L 384.5,228.2 L 386.0,214.3 L 390.0,228.4 L 391.5,214.5 L 395.5,228.7 L 397.0,214.8 L 401.0,228.9 L 402.5,215.1 L 406.5,229.2 L 408.0,215.3 L 412.0,229.5 L 413.5,215.6 L 417.5,229.7 L 419.0,215.8 L 423.0,230.0 L 424.5,216.1 L 428.5,230.2 L 430.0,216.4 L 434.0,230.5 L 435.5,216.6 L 439.5,230.8 L 441.0,216.9 L 445.0,231.0 L 446.5,217.2 L 450.5,231.3 L 452.0,217.4 L 456.0,231.5 L 457.5,217.7 L 461.5,231.8 L 463.0,217.9 L 467.0,232.1 L 468.5,218.2 L 472.5,232.3 L 474.0,218.5 L 478.0,232.6 L 479.5,218.7 L 483.5,232.8 L 485.0,219.0 L 489.0,233.1 L 490.5,219.2 L 494.5,233.4 L 496.0,219.5" fill="none" stroke-linejoin="round" stroke-linecap="round" stroke="#12e612" stroke-width="2"/><path d="M496.0,233.0 L500.0,222.0 L515.0,220.0" fill="none" stroke-linejoin="round" stroke-linecap="round" stroke="#08a008" stroke-width="3.6"/><path d="M496.0,233.0 L500.0,222.0 L515.0,220.0" fill="none" stroke-linejoin="round" stroke-linecap="round" stroke="#12e612" stroke-width="2"/><path d="M178.0,223.0 L185.0,237.0 L189.0,225.0 L 190.0,224.0 L 193.6,236.5 L 195.2,225.0 L 198.9,237.5 L 200.5,226.0 L 204.1,238.5 L 205.8,227.0 L 209.4,239.5 L 211.0,228.0 L 214.6,240.5 L 216.2,229.0 L 219.9,241.5 L 221.5,230.0 L 225.1,242.5 L 226.8,231.0 L 230.4,243.5 L 232.0,232.0" fill="none" stroke-linejoin="round" stroke-linecap="round" stroke="#08a008" stroke-width="3.6"/><path d="M178.0,223.0 L185.0,237.0 L189.0,225.0 L 190.0,224.0 L 193.6,236.5 L 195.2,225.0 L 198.9,237.5 L 200.5,226.0 L 204.1,238.5 L 205.8,227.0 L 209.4,239.5 L 211.0,228.0 L 214.6,240.5 L 216.2,229.0 L 219.9,241.5 L 221.5,230.0 L 225.1,242.5 L 226.8,231.0 L 230.4,243.5 L 232.0,232.0" fill="none" stroke-linejoin="round" stroke-linecap="round" stroke="#12e612" stroke-width="2"/><path d="M0,297.3 H645" stroke="#e80000" stroke-width="1.5"/><path d="M636,291 L644.5,297.3 L636,304" fill="none" stroke="#f00000" stroke-width="1"/><path d="M544.5,0 V149 M545.5,149 V484" stroke="#f00000" stroke-width="1.2"/></g></svg>
<svg style="left:739px;top:166px" width="20" height="22" viewBox="0 0 20 22"><circle cx="10" cy="7" r="5.2" fill="none" stroke="#c4c4c4" stroke-width="1"/><path d="M10,6 L6,16 H14 Z" fill="none" stroke="#c4c4c4" stroke-width="1"/><rect x="2" y="15.5" width="16" height="3" rx="1.2" fill="none" stroke="#c4c4c4" stroke-width="1"/></svg>
<svg style="left:738px;top:196px" width="22" height="22" viewBox="0 0 22 22"><rect x="4.5" y="0.8" width="12" height="9" fill="#fff" stroke="#777" stroke-width="1.3"/><path d="M6.5,8 l3,-3.5 l2,2 l1.5,-1.3 l2.5,2.8" fill="#444"/><path d="M1,7 l3,1.5 h12 l4,-2.5 l-0.8,13 H2.8 Z" fill="#00239a"/><path d="M10.6,10 v6 M7.8,13.6 l2.8,3 l2.8,-3" stroke="#fff" stroke-width="1.6" fill="none"/></svg>
<div class="abs" style="left:736px;top:223px;width:26px;height:1px;background:#8a8a8a;"></div>
<svg style="left:738px;top:232px" width="22" height="22" viewBox="0 0 22 22"><circle cx="9.5" cy="9" r="5.6" fill="none" stroke="#00239a" stroke-width="2"/><path d="M13.5,13 L20,19" stroke="#00239a" stroke-width="3"/><path d="M13,1.8 h6" stroke="#00239a" stroke-width="1.3"/><path d="M1,18.5 h5 M3.5,16 v5" stroke="#00239a" stroke-width="1.3"/></svg>
<div class="abs" style="left:719px;top:660px;width:709px;height:285px;background:#f0f0f0;border:1px solid #7c7c7c;border-top:2px solid #7c7c7c;box-shadow:inset 1px 1px 0 #fff"></div>
<div class="abs" style="left:720px;top:662px;width:707px;height:282px;overflow:hidden">
<div class="t" style="left:8px;top:11px;font-size:11.7px;color:#000;line-height:16px;">Pass/Fail:</div><div class="t" style="left:66px;top:11px;font-size:11.7px;color:#f00000;line-height:16px;">Failed</div><div class="abs" style="left:8px;top:41px;width:377px;height:171px;background:transparent;border:1px solid #b4b4b4;box-shadow:inset 1px 1px 0 #fff,1px 1px 0 #fff"></div><div class="t" style="left:14px;top:35px;font-size:13px;line-height:16px;font-weight:bold;background:#f0f0f0;padding:0 3px">Filters</div><div class="t" style="left:25px;top:64px;font-size:11.7px;color:#000;line-height:16px;width:80px;text-align:center;">Feature</div><div class="t" style="left:121px;top:64px;font-size:11.7px;color:#000;line-height:16px;width:80px;text-align:center;">Minimum</div><div class="t" style="left:219px;top:64px;font-size:11.7px;color:#000;line-height:16px;width:80px;text-align:center;">Maximum</div><div class="t" style="left:300px;top:64px;font-size:11.7px;color:#000;line-height:16px;width:80px;text-align:center;">Actual</div><svg style="left:30px;top:89.0px" width="16" height="16" viewBox="0 0 16 16"><rect x="0.5" y="0.5" width="15" height="15" rx="3" fill="#d2d2d2" stroke="#c4c4c4" stroke-width="1"/><path d="M4,8.2 L7,11 L12.2,4.8" fill="none" stroke="#f4f4f4" stroke-width="1.4"/></svg><div class="t" style="left:51px;top:89.0px;font-size:11.7px;color:#6d6d6d;line-height:16px;">Area</div><div class="abs" style="left:128px;top:85.0px;width:69px;height:24px;background:#f0f0f0;border:1px solid #a9a9a9;box-shadow:inset 1px 1px 0 #d8d8d8,inset -1px -1px 0 #fbfbfb"></div><div class="t" style="left:128px;top:89.0px;font-size:11px;color:#bdbdbd;line-height:16px;width:69px;text-align:center;">250</div><div class="abs" style="left:225px;top:85.0px;width:69px;height:24px;background:#f0f0f0;border:1px solid #a9a9a9;box-shadow:inset 1px 1px 0 #d8d8d8,inset -1px -1px 0 #fbfbfb"></div><div class="t" style="left:225px;top:89.0px;font-size:11px;color:#bdbdbd;line-height:16px;width:69px;text-align:center;">5000</div><svg style="left:30px;top:116.5px" width="16" height="16" viewBox="0 0 16 16"><rect x="0.5" y="0.5" width="15" height="15" rx="3" fill="#fff" stroke="#bdbdbd" stroke-width="1"/></svg><div class="t" style="left:51px;top:116.5px;font-size:11.7px;color:#6d6d6d;line-height:16px;">Width</div><div class="abs" style="left:128px;top:112.5px;width:69px;height:24px;background:#f0f0f0;border:1px solid #a9a9a9;box-shadow:inset 1px 1px 0 #d8d8d8,inset -1px -1px 0 #fbfbfb"></div><div class="t" style="left:128px;top:116.5px;font-size:11px;color:#bdbdbd;line-height:16px;width:69px;text-align:center;">0</div><div class="abs" style="left:225px;top:112.5px;width:69px;height:24px;background:#f0f0f0;border:1px solid #a9a9a9;box-shadow:inset 1px 1px 0 #d8d8d8,inset -1px -1px 0 #fbfbfb"></div><div class="t" style="left:225px;top:116.5px;font-size:11px;color:#bdbdbd;line-height:16px;width:69px;text-align:center;">0</div><svg style="left:30px;top:144.0px" width="16" height="16" viewBox="0 0 16 16"><rect x="0.5" y="0.5" width="15" height="15" rx="3" fill="#fff" stroke="#bdbdbd" stroke-width="1"/></svg><div class="t" style="left:51px;top:144.0px;font-size:11.7px;color:#6d6d6d;line-height:16px;">Height</div><div class="abs" style="left:128px;top:140.0px;width:69px;height:24px;background:#f0f0f0;border:1px solid #a9a9a9;box-shadow:inset 1px 1px 0 #d8d8d8,inset -1px -1px 0 #fbfbfb"></div><div class="t" style="left:128px;top:144.0px;font-size:11px;color:#bdbdbd;line-height:16px;width:69px;text-align:center;">0</div><div class="abs" style="left:225px;top:140.0px;width:69px;height:24px;background:#f0f0f0;border:1px solid #a9a9a9;box-shadow:inset 1px 1px 0 #d8d8d8,inset -1px -1px 0 #fbfbfb"></div><div class="t" style="left:225px;top:144.0px;font-size:11px;color:#bdbdbd;line-height:16px;width:69px;text-align:center;">0</div><div class="t" style="left:31px;top:181px;font-size:11.7px;color:#000;line-height:16px;">Single Blob:</div><div class="abs" style="left:113px;top:178px;width:100px;height:23px;background:#f6f6f6;border:1px solid #e9e9e9;border-radius:2px"></div><div class="t" style="left:118px;top:181px;font-size:11.7px;color:#6d6d6d;line-height:16px;">Off</div><svg style="left:195px;top:186px" width="12" height="8" viewBox="0 0 12 8"><path d="M1,1.5 L6,6.5 L11,1.5" fill="none" stroke="#777" stroke-width="1"/></svg><div class="abs" style="left:8px;top:224px;width:377px;height:80px;background:transparent;border:1px solid #b4b4b4;box-shadow:inset 1px 1px 0 #fff,1px 1px 0 #fff"></div><div class="t" style="left:14px;top:218px;font-size:13px;line-height:16px;font-weight:bold;background:#f0f0f0;padding:0 3px">Filtered Number of Blobs</div><div class="t" style="left:35px;top:240px;font-size:11.7px;color:#000;line-height:16px;width:80px;text-align:center;">Minimum</div><div class="t" style="left:136px;top:240px;font-size:11.7px;color:#000;line-height:16px;width:80px;text-align:center;">Maximum</div><div class="t" style="left:235px;top:240px;font-size:11.7px;color:#000;line-height:16px;width:80px;text-align:center;">Actual</div><div class="abs" style="left:28px;top:261px;width:87px;height:24px;background:#f0f0f0;border:1px solid #a9a9a9;box-shadow:inset 1px 1px 0 #d8d8d8,inset -1px -1px 0 #fbfbfb"></div><div class="t" style="left:28px;top:265.0px;font-size:11px;color:#bdbdbd;line-height:16px;width:87px;text-align:center;">1</div><div class="abs" style="left:132px;top:261px;width:87px;height:24px;background:#f0f0f0;border:1px solid #a9a9a9;box-shadow:inset 1px 1px 0 #d8d8d8,inset -1px -1px 0 #fbfbfb"></div><div class="t" style="left:132px;top:265.0px;font-size:11px;color:#bdbdbd;line-height:16px;width:87px;text-align:center;">1</div><div class="t" style="left:235px;top:265px;font-size:11.7px;color:#f00000;line-height:16px;width:80px;text-align:center;">2</div><div class="abs" style="left:392px;top:41px;width:197px;height:260px;background:transparent;border:1px solid #b4b4b4;box-shadow:inset 1px 1px 0 #fff,1px 1px 0 #fff"></div><div class="t" style="left:398px;top:35px;font-size:13px;line-height:16px;font-weight:bold;background:#f0f0f0;padding:0 3px">Outputs</div><svg style="left:408px;top:59.0px" width="16" height="16" viewBox="0 0 16 16"><rect x="0.5" y="0.5" width="15" height="15" rx="3" fill="#d2d2d2" stroke="#c4c4c4" stroke-width="1"/><path d="M4,8.2 L7,11 L12.2,4.8" fill="none" stroke="#f4f4f4" stroke-width="1.4"/></svg><div class="t" style="left:429px;top:59.0px;font-size:11.7px;color:#6d6d6d;line-height:16px;">Enable Output Blob List</div><svg style="left:408px;top:86.5px" width="16" height="16" viewBox="0 0 16 16"><rect x="0.5" y="0.5" width="15" height="15" rx="3" fill="#d2d2d2" stroke="#c4c4c4" stroke-width="1"/><path d="M4,8.2 L7,11 L12.2,4.8" fill="none" stroke="#f4f4f4" stroke-width="1.4"/></svg><div class="t" style="left:429px;top:86.5px;font-size:11.7px;color:#6d6d6d;line-height:16px;">Enable Output Area List</div><svg style="left:408px;top:114.0px" width="16" height="16" viewBox="0 0 16 16"><rect x="0.5" y="0.5" width="15" height="15" rx="3" fill="#d2d2d2" stroke="#c4c4c4" stroke-width="1"/><path d="M4,8.2 L7,11 L12.2,4.8" fill="none" stroke="#f4f4f4" stroke-width="1.4"/></svg><div class="t" style="left:429px;top:114.0px;font-size:11.7px;color:#6d6d6d;line-height:16px;">Enable Output Dim. Lists</div><svg style="left:408px;top:141.5px" width="16" height="16" viewBox="0 0 16 16"><rect x="0.5" y="0.5" width="15" height="15" rx="3" fill="#d2d2d2" stroke="#c4c4c4" stroke-width="1"/><path d="M4,8.2 L7,11 L12.2,4.8" fill="none" stroke="#f4f4f4" stroke-width="1.4"/></svg><div class="t" style="left:429px;top:141.5px;font-size:11.7px;color:#6d6d6d;line-height:16px;">Enable Output Centroid List</div><svg style="left:408px;top:169.0px" width="16" height="16" viewBox="0 0 16 16"><rect x="0.5" y="0.5" width="15" height="15" rx="3" fill="#d2d2d2" stroke="#c4c4c4" stroke-width="1"/><path d="M4,8.2 L7,11 L12.2,4.8" fill="none" stroke="#f4f4f4" stroke-width="1.4"/></svg><div class="t" style="left:429px;top:169.0px;font-size:11.7px;color:#6d6d6d;line-height:16px;">Enable Failing Blob List</div><svg style="left:408px;top:196.5px" width="16" height="16" viewBox="0 0 16 16"><rect x="0.5" y="0.5" width="15" height="15" rx="3" fill="#fff" stroke="#bdbdbd" stroke-width="1"/></svg><div class="t" style="left:429px;top:196.5px;font-size:11.7px;color:#6d6d6d;line-height:16px;">Enable Output Origin</div><div class="abs" style="left:685px;top:0px;width:22px;height:282px;background:#f0f0f0;"></div><div class="abs" style="left:695px;top:21px;width:2px;height:220px;background:#6e6e6e;"></div>
</div>
<div class="abs" style="left:714px;top:952px;width:74px;height:29px;background:#f8f8f8;border:1px solid #ededed;border-top:none"></div>
<div class="t" style="left:723px;top:959px;font-size:13.5px;color:#000;line-height:16px;">Summary</div>
<svg width="0" height="0" style="left:0;top:0"><defs><filter id="tb" x="-10%" y="-10%" width="120%" height="120%"><feGaussianBlur stdDeviation="0.4"/></filter><linearGradient id="tg1" x1="0" y1="0" x2="1" y2="0"><stop offset="0" stop-color="#6a6a6a"/><stop offset="0.5" stop-color="#c9c9c9"/><stop offset="1" stop-color="#fff"/></linearGradient><linearGradient id="tg2" x1="0" y1="0" x2="0" y2="1"><stop offset="0" stop-color="#f2f2f2"/><stop offset="1" stop-color="#7a7a7a"/></linearGradient></defs></svg>
<div class="abs" style="left:1436px;top:125px;width:478px;height:1px;background:#dcdcdc;"></div>
<div class="abs" style="left:1436px;top:126px;width:478px;height:1px;background:#f6f6f6;"></div>
<div class="abs" style="left:1441px;top:127px;width:473px;height:45px;background:#efefef;"></div>
<div class="abs" style="left:1442px;top:172px;width:462px;height:774px;background:#fff;"></div>
<div class="abs" style="left:1904px;top:172px;width:10px;height:774px;background:#f4f4f4;"></div>
<svg style="left:1449px;top:135px" width="30" height="30" viewBox="0 0 30 30"><rect x="5" y="5.5" width="24.2" height="24" rx="3" fill="#f0f0f0" stroke="#2d47b3" stroke-width="1.5"/><rect x="1" y="1" width="24.5" height="24.5" rx="3" fill="#fff" stroke="#00239a" stroke-width="1.8"/><path d="M4.5,12.5 L11,19 L23,7" fill="none" stroke="#00239a" stroke-width="2.6"/></svg>
<svg style="left:1482px;top:135px" width="32" height="30" viewBox="0 0 32 30"><rect x="4.5" y="4.5" width="24" height="24" rx="3" fill="#ececec" stroke="#b5b5b5" stroke-width="1.2"/><rect x="0.8" y="0.8" width="25" height="25" rx="3" fill="#f1f1f1" stroke="#c9c9c9" stroke-width="1" stroke-dasharray="1.2 1"/></svg>
<svg style="left:1515px;top:136px" width="30" height="30" viewBox="0 0 30 30"><path d="M1,8 l4,2 h14 l5,-3 l-1,18 H3 Z" fill="#8e8e8e"/><rect x="5" y="1" width="14" height="10" fill="#a8a8a8"/><path d="M7,9 l3,-4 l2.5,2.5 l2,-1.5 l3,3" fill="#8e8e8e"/><circle cx="23.5" cy="21" r="5.2" fill="#a8a8a8"/><path d="M20.8,21 h5.4 M23.5,18.3 v5.4" stroke="#d9d9d9" stroke-width="1.3"/></svg>
<svg style="left:1559px;top:135px" width="18" height="30" viewBox="0 0 18 30"><rect x="0" y="0" width="18" height="29" fill="#00239a"/><rect x="0" y="4.5" width="18" height="20" fill="#fff"/><rect x="1.6" y="1.2" width="2.6" height="1.8" fill="#fff"/><rect x="1.6" y="26" width="2.6" height="1.8" fill="#fff"/><rect x="5.800000000000001" y="1.2" width="2.6" height="1.8" fill="#fff"/><rect x="5.800000000000001" y="26" width="2.6" height="1.8" fill="#fff"/><rect x="10.0" y="1.2" width="2.6" height="1.8" fill="#fff"/><rect x="10.0" y="26" width="2.6" height="1.8" fill="#fff"/><rect x="14.200000000000001" y="1.2" width="2.6" height="1.8" fill="#fff"/><rect x="14.200000000000001" y="26" width="2.6" height="1.8" fill="#fff"/><text x="9" y="20.5" font-size="16" font-weight="bold" text-anchor="middle" fill="#00239a" font-family="Liberation Sans,sans-serif">&lt;</text></svg>
<svg style="left:1579px;top:135px" width="18" height="30" viewBox="0 0 18 30"><rect x="0" y="0" width="18" height="29" fill="#9c9c9c"/><rect x="0" y="4.5" width="18" height="20" fill="#b4b4b4"/><rect x="1.6" y="1.2" width="2.6" height="1.8" fill="#bcbcbc"/><rect x="1.6" y="26" width="2.6" height="1.8" fill="#bcbcbc"/><rect x="5.800000000000001" y="1.2" width="2.6" height="1.8" fill="#bcbcbc"/><rect x="5.800000000000001" y="26" width="2.6" height="1.8" fill="#bcbcbc"/><rect x="10.0" y="1.2" width="2.6" height="1.8" fill="#bcbcbc"/><rect x="10.0" y="26" width="2.6" height="1.8" fill="#bcbcbc"/><rect x="14.200000000000001" y="1.2" width="2.6" height="1.8" fill="#bcbcbc"/><rect x="14.200000000000001" y="26" width="2.6" height="1.8" fill="#bcbcbc"/><text x="9" y="20.5" font-size="16" text-anchor="middle" fill="#9a9a9a" font-family="Liberation Sans,sans-serif">&gt;</text></svg>
<svg style="left:1611px;top:135px" width="30" height="30" viewBox="0 0 30 30"><circle cx="11.5" cy="11.5" r="9.3" fill="none" stroke="#00239a" stroke-width="2.4"/><path d="M18.5,18.5 L28,28" stroke="#00239a" stroke-width="4.2" stroke-linecap="round"/><path d="M6.5,11.5 h10" stroke="#00239a" stroke-width="2.2"/><path d="M11.5,6.5 v10" stroke="#00239a" stroke-width="2.2"/></svg>
<svg style="left:1645px;top:135px" width="30" height="30" viewBox="0 0 30 30"><circle cx="11.5" cy="11.5" r="9.3" fill="none" stroke="#00239a" stroke-width="2.4"/><path d="M18.5,18.5 L28,28" stroke="#00239a" stroke-width="4.2" stroke-linecap="round"/><path d="M6.5,11.5 h10" stroke="#00239a" stroke-width="2.2"/></svg>
<div class="t" style="left:1688px;top:142px;font-size:13.5px;color:#000;line-height:16px;">Max:</div>
<div class="abs" style="left:1722px;top:136px;width:38px;height:27px;background:#fff;border:1px solid #c9c9c9;border-radius:2px"></div>
<div class="t" style="left:1722px;top:142px;font-size:13.5px;color:#000;line-height:16px;width:32px;text-align:right;">10</div>
<div class="abs" style="left:1442px;top:234px;width:462px;height:1px;background:#f0f0f0;"></div>
<svg style="left:1447px;top:195px" width="17" height="17" viewBox="0 0 17 17"><rect x="0.7" y="0.7" width="15.2" height="15.2" rx="3.2" fill="#f3f3f3" stroke="#7a7a7a" stroke-width="1.2"/></svg>
<svg style="left:1474.5px;top:172.3px" width="62.5" height="61" viewBox="0 0 62.5 61"><rect x="1.25" y="1.25" width="60.0" height="58.5" fill="#fff" stroke="#00ff00" stroke-width="2.5"/><rect x="2.5" y="7.1" width="57.5" height="46.8" fill="#fff"/><g transform="translate(2.5,9)" fill="none" stroke="#111" stroke-linecap="butt" filter="url(#tb)"><rect x="4" y="8.5" width="12" height="18.5" fill="url(#tg1)" stroke="none"/><path d="M6,23.5 H57.5 V28 H10 Z" fill="url(#tg2)" stroke="none"/><path d="M0,8.6 H5 Q9,6.6 14,6.9 L57.5,7.6" stroke-width="2.3"/><path d="M0,27.6 H5 Q9,29 14,29 L57.5,29" stroke-width="2.2"/><path d="M3.2,8 V28" stroke-width="4.6"/><path d="M7,9.5 Q5.6,18 7.2,27" stroke-width="1.2" stroke="#333"/><path d="M6,11.6 H13.6 V17.6" stroke-width="1.1" stroke="#222"/><path d="M12,24.2 H51.5 V17.5 M49,17.6 H54.5" stroke-width="1.2" stroke="#222"/><path d="M18,18 L22,18.6 L30,18.2 L46,17.8" stroke-width="1" stroke-dasharray="1.6 0.7" stroke="#333"/></g><path d="M5.5,45.0 l2.5,4 M23.5,44.0 q0,4 3.5,6" stroke="#ececec" stroke-width="1.6" fill="none"/></svg>
<div class="t" style="left:1542px;top:196px;font-size:13.5px;color:#000;line-height:16px;">Sample Bulb - 01 Pass.png</div>
<div class="abs" style="left:1442px;top:297px;width:462px;height:1px;background:#f0f0f0;"></div>
<svg style="left:1447px;top:258px" width="17" height="17" viewBox="0 0 17 17"><rect x="0.7" y="0.7" width="15.2" height="15.2" rx="3.2" fill="#f3f3f3" stroke="#7a7a7a" stroke-width="1.2"/></svg>
<svg style="left:1474.5px;top:235.3px" width="62.5" height="61" viewBox="0 0 62.5 61"><rect x="1.25" y="1.25" width="60.0" height="58.5" fill="#fff" stroke="#00ff00" stroke-width="2.5"/><rect x="2.5" y="7.1" width="57.5" height="46.8" fill="#fff"/><g transform="translate(2.5,9)" fill="none" stroke="#111" stroke-linecap="butt" filter="url(#tb)"><rect x="4" y="8.5" width="12" height="18.5" fill="url(#tg1)" stroke="none"/><path d="M6,23.5 H57.5 V28 H10 Z" fill="url(#tg2)" stroke="none"/><path d="M0,8.6 H5 Q9,6.6 14,6.9 L57.5,7.6" stroke-width="2.3"/><path d="M0,27.6 H5 Q9,29 14,29 L57.5,29" stroke-width="2.2"/><path d="M3.2,8 V28" stroke-width="4.6"/><path d="M7,9.5 Q5.6,18 7.2,27" stroke-width="1.2" stroke="#333"/><path d="M6,11.6 H13.6 V17.6" stroke-width="1.1" stroke="#222"/><path d="M12,24.2 H52 V19" stroke-width="1.2" stroke="#222"/><path d="M15,17.2 L18,19 M20,19 L49,19" stroke-width="1" stroke-dasharray="1.8 0.6" stroke="#333"/></g><path d="M5.5,45.0 l2.5,4 M23.5,44.0 q0,4 3.5,6" stroke="#ececec" stroke-width="1.6" fill="none"/></svg>
<div class="t" style="left:1542px;top:259px;font-size:13.5px;color:#000;line-height:16px;">Sample Bulb - 02 Pass.png</div>
<div class="abs" style="left:1442px;top:359px;width:462px;height:1px;background:#f0f0f0;"></div>
<svg style="left:1447px;top:320px" width="17" height="17" viewBox="0 0 17 17"><rect x="0.7" y="0.7" width="15.2" height="15.2" rx="3.2" fill="#f3f3f3" stroke="#7a7a7a" stroke-width="1.2"/></svg>
<svg style="left:1474.5px;top:297.3px" width="62.5" height="61" viewBox="0 0 62.5 61"><rect x="1.25" y="1.25" width="60.0" height="58.5" fill="#fff" stroke="#00ff00" stroke-width="2.5"/><rect x="2.5" y="7.1" width="57.5" height="46.8" fill="#fff"/><g transform="translate(2.5,7)" fill="none" stroke="#111" stroke-linecap="butt" filter="url(#tb)"><rect x="4" y="8.5" width="12" height="18.5" fill="url(#tg1)" stroke="none"/><path d="M6,23.5 H57.5 V28 H10 Z" fill="url(#tg2)" stroke="none"/><path d="M0,8.6 H5 Q9,6.6 14,6.9 L57.5,7.6" stroke-width="2.3"/><path d="M0,27.6 H5 Q9,29 14,29 L57.5,29" stroke-width="2.2"/><path d="M3.2,8 V28" stroke-width="4.6"/><path d="M7,9.5 Q5.6,18 7.2,27" stroke-width="1.2" stroke="#333"/><path d="M6,11.6 H13.6 V17.6" stroke-width="1.1" stroke="#222"/><path d="M12,24.2 H51.5 V17.5 M49,17.6 H54.5" stroke-width="1.2" stroke="#222"/><path d="M18,18 L22,18.6 L30,18.2 L46,17.8" stroke-width="1" stroke-dasharray="1.6 0.7" stroke="#333"/></g><path d="M5.5,44.2 l2.5,4 M23.5,43.2 q0,4 3.5,6" stroke="#ececec" stroke-width="1.6" fill="none"/></svg>
<div class="t" style="left:1542px;top:321px;font-size:13.5px;color:#000;line-height:16px;">Sample Bulb - 03 Pass.png</div>
<div class="abs" style="left:1442px;top:422px;width:462px;height:1px;background:#f0f0f0;"></div>
<svg style="left:1447px;top:383px" width="17" height="17" viewBox="0 0 17 17"><rect x="0.7" y="0.7" width="15.2" height="15.2" rx="3.2" fill="#f3f3f3" stroke="#7a7a7a" stroke-width="1.2"/></svg>
<svg style="left:1474.5px;top:360.3px" width="62.5" height="61" viewBox="0 0 62.5 61"><rect x="1.25" y="1.25" width="60.0" height="58.5" fill="#fff" stroke="#ff0000" stroke-width="2.5"/><rect x="2.5" y="7.1" width="57.5" height="46.8" fill="#fff"/><g transform="translate(2.5,9)" fill="none" stroke="#111" stroke-linecap="butt" filter="url(#tb)"><rect x="4" y="8.5" width="12" height="18.5" fill="url(#tg1)" stroke="none"/><path d="M6,23.5 H57.5 V28 H10 Z" fill="url(#tg2)" stroke="none"/><path d="M0,8.6 H5 Q9,6.6 14,6.9 L57.5,7.6" stroke-width="2.3"/><path d="M0,27.6 H5 Q9,29 14,29 L57.5,29" stroke-width="2.2"/><path d="M3.2,8 V28" stroke-width="4.6"/><path d="M7,9.5 Q5.6,18 7.2,27" stroke-width="1.2" stroke="#333"/><path d="M6,11.6 H13.6 V17.6" stroke-width="1.1" stroke="#222"/><path d="M12,24.6 H53 V17.2" stroke-width="1.2" stroke="#222"/><path d="M23,19.2 L33,18.8 L42,17.6 L52,16.6" stroke-width="1.3" stroke-dasharray="1.4 0.5" stroke="#333"/></g><path d="M5.5,45.0 l2.5,4 M23.5,44.0 q0,4 3.5,6" stroke="#ececec" stroke-width="1.6" fill="none"/></svg>
<div class="t" style="left:1542px;top:384px;font-size:13.5px;color:#000;line-height:16px;">Sample Bulb - 04 Fail.png</div>
<div class="abs" style="left:1442px;top:484px;width:462px;height:1px;background:#f0f0f0;"></div>
<svg style="left:1447px;top:445px" width="17" height="17" viewBox="0 0 17 17"><rect x="0.7" y="0.7" width="15.2" height="15.2" rx="3.2" fill="#f3f3f3" stroke="#7a7a7a" stroke-width="1.2"/></svg>
<svg style="left:1474.5px;top:422.3px" width="62.5" height="61" viewBox="0 0 62.5 61"><rect x="1.25" y="1.25" width="60.0" height="58.5" fill="#fff" stroke="#ff0000" stroke-width="2.5"/><rect x="2.5" y="7.1" width="57.5" height="46.8" fill="#fff"/><g transform="translate(2.5,11)" fill="none" stroke="#111" stroke-linecap="butt" filter="url(#tb)"><rect x="4" y="8.5" width="12" height="18.5" fill="url(#tg1)" stroke="none"/><path d="M6,23.5 H57.5 V28 H10 Z" fill="url(#tg2)" stroke="none"/><path d="M0,8.6 H5 Q9,6.6 14,6.9 L57.5,7.6" stroke-width="2.3"/><path d="M0,27.6 H5 Q9,29 14,29 L57.5,29" stroke-width="2.2"/><path d="M3.2,8 V28" stroke-width="4.6"/><path d="M7,9.5 Q5.6,18 7.2,27" stroke-width="1.2" stroke="#333"/><path d="M6,11.6 H13.6 V17.6" stroke-width="1.1" stroke="#222"/><path d="M12,24.6 H53 V17.2" stroke-width="1.2" stroke="#222"/><path d="M23,19.2 L33,18.8 L42,17.6 L52,16.6" stroke-width="1.3" stroke-dasharray="1.4 0.5" stroke="#333"/></g><path d="M5.5,45.8 l2.5,4 M23.5,44.8 q0,4 3.5,6" stroke="#ececec" stroke-width="1.6" fill="none"/></svg>
<div class="t" style="left:1542px;top:446px;font-size:13.5px;color:#000;line-height:16px;">Sample Bulb - 05 Fail.png</div>
<div class="abs" style="left:1442px;top:547px;width:462px;height:1px;background:#f0f0f0;"></div>
<svg style="left:1447px;top:508px" width="17" height="17" viewBox="0 0 17 17"><rect x="0.7" y="0.7" width="15.2" height="15.2" rx="3.2" fill="#f3f3f3" stroke="#7a7a7a" stroke-width="1.2"/></svg>
<svg style="left:1474.5px;top:485.3px" width="62.5" height="61" viewBox="0 0 62.5 61"><rect x="1.25" y="1.25" width="60.0" height="58.5" fill="#fff" stroke="#00ff00" stroke-width="2.5"/><rect x="2.5" y="7.1" width="57.5" height="46.8" fill="#fff"/><g transform="translate(2.5,7)" fill="none" stroke="#111" stroke-linecap="butt" filter="url(#tb)"><rect x="4" y="8.5" width="12" height="18.5" fill="url(#tg1)" stroke="none"/><path d="M6,23.5 H57.5 V28 H10 Z" fill="url(#tg2)" stroke="none"/><path d="M0,8.6 H5 Q9,6.6 14,6.9 L57.5,7.6" stroke-width="2.3"/><path d="M0,27.6 H5 Q9,29 14,29 L57.5,29" stroke-width="2.2"/><path d="M3.2,8 V28" stroke-width="4.6"/><path d="M7,9.5 Q5.6,18 7.2,27" stroke-width="1.2" stroke="#333"/><path d="M6,11.6 H13.6 V17.6" stroke-width="1.1" stroke="#222"/><path d="M12,24.2 H52 V19" stroke-width="1.2" stroke="#222"/><path d="M15,17.2 L18,19 M20,19 L49,19" stroke-width="1" stroke-dasharray="1.8 0.6" stroke="#333"/></g><path d="M5.5,44.2 l2.5,4 M23.5,43.2 q0,4 3.5,6" stroke="#ececec" stroke-width="1.6" fill="none"/></svg>
<div class="t" style="left:1542px;top:509px;font-size:13.5px;color:#000;line-height:16px;">Sample Bulb - 06 Pass.png</div>
<div class="abs" style="left:1442px;top:609px;width:462px;height:1px;background:#f0f0f0;"></div>
<svg style="left:1447px;top:570px" width="17" height="17" viewBox="0 0 17 17"><rect x="0.7" y="0.7" width="15.2" height="15.2" rx="3.2" fill="#f3f3f3" stroke="#7a7a7a" stroke-width="1.2"/></svg>
<svg style="left:1474.5px;top:547.3px" width="62.5" height="61" viewBox="0 0 62.5 61"><rect x="1.25" y="1.25" width="60.0" height="58.5" fill="#fff" stroke="#00ff00" stroke-width="2.5"/><rect x="2.5" y="7.1" width="57.5" height="46.8" fill="#fff"/><g transform="translate(2.5,17)" fill="none" stroke="#111" stroke-linecap="butt" filter="url(#tb)"><rect x="4" y="8.5" width="12" height="18.5" fill="url(#tg1)" stroke="none"/><path d="M6,23.5 H57.5 V28 H10 Z" fill="url(#tg2)" stroke="none"/><path d="M0,8.6 H5 Q9,6.6 14,6.9 L57.5,7.6" stroke-width="2.3"/><path d="M0,27.6 H5 Q9,29 14,29 L57.5,29" stroke-width="2.2"/><path d="M3.2,8 V28" stroke-width="4.6"/><path d="M7,9.5 Q5.6,18 7.2,27" stroke-width="1.2" stroke="#333"/><path d="M6,11.6 H13.6 V17.6" stroke-width="1.1" stroke="#222"/><path d="M12,24.2 H51.5 V17.5 M49,17.6 H54.5" stroke-width="1.2" stroke="#222"/><path d="M18,18 L22,18.6 L30,18.2 L46,17.8" stroke-width="1" stroke-dasharray="1.6 0.7" stroke="#333"/></g><path d="M5.5,48.2 l2.5,4 M23.5,47.2 q0,4 3.5,6" stroke="#ececec" stroke-width="1.6" fill="none"/></svg>
<div class="t" style="left:1542px;top:571px;font-size:13.5px;color:#000;line-height:16px;">Sample Bulb - 07 Pass.png</div>
<div class="abs" style="left:1442px;top:672px;width:462px;height:1px;background:#f0f0f0;"></div>
<svg style="left:1447px;top:633px" width="17" height="17" viewBox="0 0 17 17"><rect x="0.7" y="0.7" width="15.2" height="15.2" rx="3.2" fill="#f3f3f3" stroke="#7a7a7a" stroke-width="1.2"/></svg>
<svg style="left:1474.5px;top:610.3px" width="62.5" height="61" viewBox="0 0 62.5 61"><rect x="1.25" y="1.25" width="60.0" height="58.5" fill="#fff" stroke="#00ff00" stroke-width="2.5"/><rect x="2.5" y="7.1" width="57.5" height="46.8" fill="#fff"/><g transform="translate(2.5,12)" fill="none" stroke="#111" stroke-linecap="butt" filter="url(#tb)"><rect x="4" y="8.5" width="12" height="18.5" fill="url(#tg1)" stroke="none"/><path d="M6,23.5 H57.5 V28 H10 Z" fill="url(#tg2)" stroke="none"/><path d="M0,8.6 H5 Q9,6.6 14,6.9 L57.5,7.6" stroke-width="2.3"/><path d="M0,27.6 H5 Q9,29 14,29 L57.5,29" stroke-width="2.2"/><path d="M3.2,8 V28" stroke-width="4.6"/><path d="M7,9.5 Q5.6,18 7.2,27" stroke-width="1.2" stroke="#333"/><path d="M6,11.6 H13.6 V17.6" stroke-width="1.1" stroke="#222"/><path d="M12,24.2 H52 V19" stroke-width="1.2" stroke="#222"/><path d="M15,17.2 L18,19 M20,19 L49,19" stroke-width="1" stroke-dasharray="1.8 0.6" stroke="#333"/></g><path d="M5.5,46.2 l2.5,4 M23.5,45.2 q0,4 3.5,6" stroke="#ececec" stroke-width="1.6" fill="none"/></svg>
<div class="t" style="left:1542px;top:634px;font-size:13.5px;color:#000;line-height:16px;">Sample Bulb - 08 Pass.png</div>
<div class="abs" style="left:1442px;top:734px;width:462px;height:1px;background:#f0f0f0;"></div>
<svg style="left:1447px;top:695px" width="17" height="17" viewBox="0 0 17 17"><rect x="0.7" y="0.7" width="15.2" height="15.2" rx="3.2" fill="#f3f3f3" stroke="#7a7a7a" stroke-width="1.2"/></svg>
<svg style="left:1474.5px;top:672.3px" width="62.5" height="61" viewBox="0 0 62.5 61"><rect x="1.25" y="1.25" width="60.0" height="58.5" fill="#fff" stroke="#ff0000" stroke-width="2.5"/><rect x="2.5" y="7.1" width="57.5" height="46.8" fill="#fff"/><g transform="translate(2.5,18)" fill="none" stroke="#111" stroke-linecap="butt" filter="url(#tb)"><rect x="4" y="8.5" width="12" height="18.5" fill="url(#tg1)" stroke="none"/><path d="M6,23.5 H57.5 V28 H10 Z" fill="url(#tg2)" stroke="none"/><path d="M0,8.6 H5 Q9,6.6 14,6.9 L57.5,7.6" stroke-width="2.3"/><path d="M0,27.6 H5 Q9,29 14,29 L57.5,29" stroke-width="2.2"/><path d="M3.2,8 V28" stroke-width="4.6"/><path d="M7,9.5 Q5.6,18 7.2,27" stroke-width="1.2" stroke="#333"/><path d="M6,11.6 H13.6 V17.6" stroke-width="1.1" stroke="#222"/><path d="M12,24.6 H53 V17.2" stroke-width="1.2" stroke="#222"/><path d="M23,19.2 L33,18.8 L42,17.6 L52,16.6" stroke-width="1.3" stroke-dasharray="1.4 0.5" stroke="#333"/></g><path d="M5.5,48.6 l2.5,4 M23.5,47.6 q0,4 3.5,6" stroke="#ececec" stroke-width="1.6" fill="none"/></svg>
<div class="t" style="left:1542px;top:696px;font-size:13.5px;color:#000;line-height:16px;">Sample Bulb - 09 Fail.png</div>
<div class="abs" style="left:1442px;top:735px;width:462px;height:62px;background:#8080ff;"></div>
<div class="abs" style="left:1473.5px;top:735px;width:64.5px;height:62px;background:#fff;"></div>
<svg style="left:1447px;top:758px" width="17" height="17" viewBox="0 0 17 17"><rect x="0.7" y="0.7" width="15.2" height="15.2" rx="3.2" fill="#f3f3f3" stroke="#7a7a7a" stroke-width="1.2"/></svg>
<svg style="left:1474.5px;top:735.3px" width="62.5" height="61" viewBox="0 0 62.5 61"><rect x="1.25" y="1.25" width="60.0" height="58.5" fill="#8080ff" stroke="#ff0000" stroke-width="2.5"/><rect x="2.5" y="7.1" width="57.5" height="46.8" fill="#fff"/><g transform="translate(2.5,10.5)" fill="none" stroke="#111" stroke-linecap="butt" filter="url(#tb)"><rect x="4" y="8.5" width="12" height="18.5" fill="url(#tg1)" stroke="none"/><path d="M6,23.5 H57.5 V28 H10 Z" fill="url(#tg2)" stroke="none"/><path d="M0,8.6 H5 Q9,6.6 14,6.9 L57.5,7.6" stroke-width="2.3"/><path d="M0,27.6 H5 Q9,29 14,29 L57.5,29" stroke-width="2.2"/><path d="M3.2,8 V28" stroke-width="4.6"/><path d="M7,9.5 Q5.6,18 7.2,27" stroke-width="1.2" stroke="#333"/><path d="M6,11.6 H13.6 V17.6" stroke-width="1.1" stroke="#222"/><path d="M12,24.6 H53 V17.2" stroke-width="1.2" stroke="#222"/><path d="M23,19.2 L33,18.8 L42,17.6 L52,16.6" stroke-width="1.3" stroke-dasharray="1.4 0.5" stroke="#333"/></g><path d="M5.5,45.6 l2.5,4 M23.5,44.6 q0,4 3.5,6" stroke="#ececec" stroke-width="1.6" fill="none"/></svg>
<div class="t" style="left:1542px;top:759px;font-size:13.5px;color:#e8e8ff;line-height:16px;">Sample Bulb - 10 Fail.png</div>
<div class="abs" style="left:1442px;top:948px;width:76px;height:30px;background:#f8f8f8;border:1px solid #ededed;border-top:none"></div>
<svg style="left:1450px;top:957px" width="12" height="18" viewBox="0 0 12 18"><path d="M0,1.5 h10 M0,6 h3 M5,6 h5 M0,10.5 h3 M5,10.5 h5 M0,15 h10" stroke="#00239a" stroke-width="2"/></svg>
<div class="t" style="left:1467px;top:960px;font-size:13.5px;color:#000;line-height:16px;">History</div>
</body></html>
